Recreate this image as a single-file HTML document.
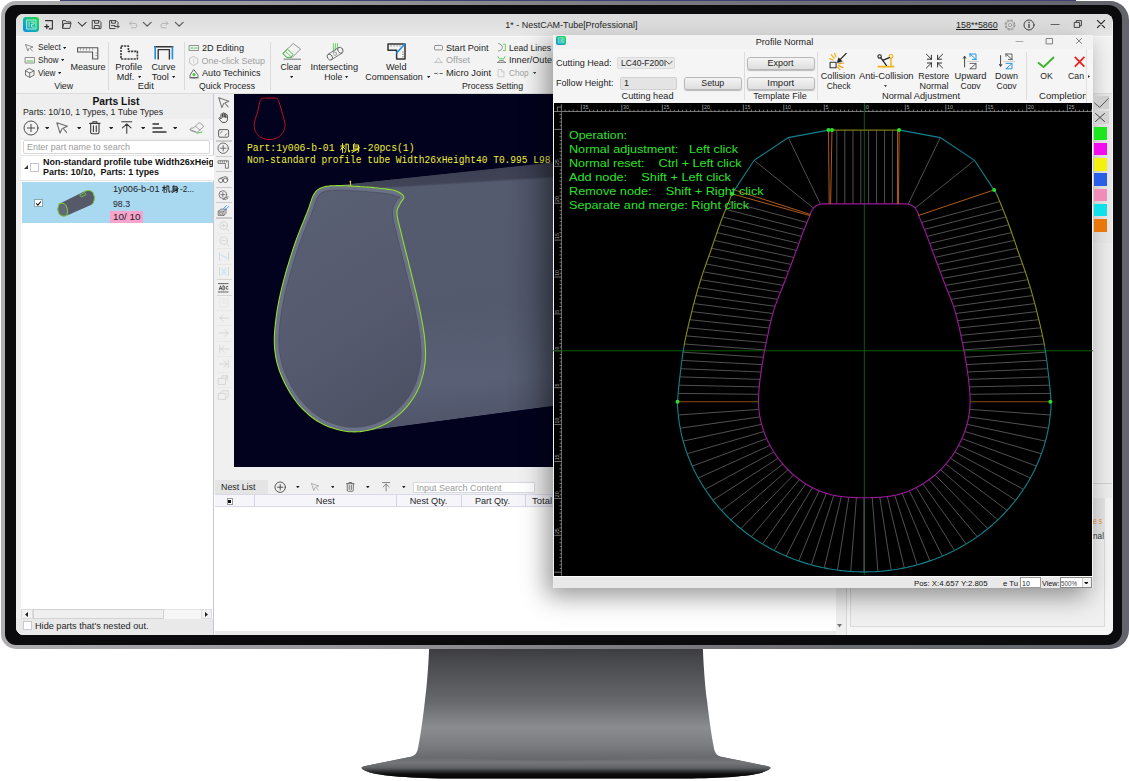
<!DOCTYPE html><html><head><meta charset="utf-8"><title>NestCAM</title><style>
html,body{margin:0;padding:0;background:#fff;}
body{width:1129px;height:781px;position:relative;overflow:hidden;font-family:"Liberation Sans",sans-serif;}
.b{position:absolute;box-sizing:border-box;display:block;}
.t{position:absolute;white-space:pre;}
#scr{position:absolute;left:16px;top:14px;width:1096.8px;height:620.6px;border-radius:7px 8px 7px 8px;overflow:hidden;background:#f0f0f0;}
#scr>.o{position:absolute;left:-16px;top:-14px;width:1129px;height:781px;}
</style></head><body>
<svg class="b" style="left:0.00px;top:0.00px;" width="1129" height="781" viewBox="0 0 1129 781">
<defs>
<linearGradient id="sg" gradientUnits="userSpaceOnUse" x1="0" y1="648" x2="0" y2="781">
<stop offset="0" stop-color="#3c3c40"/><stop offset="0.1" stop-color="#48494d"/><stop offset="0.4" stop-color="#66686c"/><stop offset="0.6" stop-color="#8a8c90"/><stop offset="0.72" stop-color="#7c7e82"/><stop offset="0.82" stop-color="#696b6f"/><stop offset="0.9" stop-color="#5c5e62"/><stop offset="1" stop-color="#3a3a3e"/>
</linearGradient>
<linearGradient id="bg2" gradientUnits="userSpaceOnUse" x1="0" y1="756" x2="0" y2="779">
<stop offset="0" stop-color="#66686c"/><stop offset="0.3" stop-color="#74767a"/><stop offset="0.52" stop-color="#5e6064"/><stop offset="0.68" stop-color="#2c2c2f"/><stop offset="0.8" stop-color="#0c0c0e"/><stop offset="1" stop-color="#050506"/>
</linearGradient>
</defs>
<path d="M429.2 646 C428.6 665 426.6 690 425 700 C422.6 722 420 738 418.4 746 C417.6 752 416 755 411 756.8 L364 766.2 Q359.6 767.4 363 769.6 C372 775.4 398 777.6 440 778.4 L692.0 778.4 C734.0 777.6 760.0 775.4 769.0 769.6 Q772.4 767.4 768.0 766.2 L721.0 756.8 C716.0 755 714.4 752 713.6 746 C712.0 738 709.4 722 707.0 700 C705.4 690 703.4 665 702.8 646 Z" fill="url(#sg)"/>
<path d="M411 756.8 L364 766.2 Q359.6 767.4 363 769.6 C372 775.4 398 777.6 440 778.4 L692.0 778.4 C734.0 777.6 760.0 775.4 769.0 769.6 Q772.4 767.4 768.0 766.2 L721.0 756.8 Q566.0 764 411 756.8Z" fill="url(#bg2)"/>
</svg>
<div class="b" style="left:60.00px;top:0.20px;width:1016.00px;height:1.40px;background:#1e1e5c;opacity:0.85;"></div>
<div class="b" style="left:1.00px;top:1.00px;width:1127.60px;height:647.60px;background:linear-gradient(90deg,#b0aeb0 0%,#a6a6aa 8%,#98989c 30%,#808085 50%,#6c6c73 75%,#64646c 100%);border-radius:15px 19px 19px 15px;"></div>
<div class="b" style="left:5.20px;top:5.00px;width:1116.80px;height:639.70px;background:#0b0b0d;border-radius:11px 14px 14px 11px;"></div>
<div id="scr"><div class="o">
<div class="b" style="left:16.00px;top:14.00px;width:1096.00px;height:21.50px;background:linear-gradient(#dcdcdc,#e2e2e2 60%,#e8e8e8);"></div>
<div class="b" style="left:16.00px;top:35.50px;width:1096.00px;height:1.50px;background:#fafafa;"></div>
<div class="b" style="left:16.00px;top:37.00px;width:1096.00px;height:55.50px;background:#f3f3f3;"></div>
<div class="b" style="left:16.00px;top:92.50px;width:1096.00px;height:1.00px;background:#dcdcdc;"></div>
<div class="b" style="left:23px;top:17px;width:15.6px;height:15px;border-radius:3px;background:linear-gradient(40deg,#0c8ee6 0%,#10b4a8 45%,#18de38 100%);"></div>
<svg class="b" style="left:25.50px;top:19.30px;overflow:visible" width="11" height="11" viewBox="0 0 11 11" fill="none" stroke-linecap="round" stroke-linejoin="round"><path d="M1 1H10V10H1Z M3 3V8 M5 3H8V5.2H5.6V8H8" stroke="#c8f4e6" stroke-width="0.9"/></svg>
<svg class="b" style="left:43.80px;top:19.50px;overflow:visible" width="9" height="9.5" viewBox="0 0 9 9.5" fill="none" stroke-linecap="round" stroke-linejoin="round"><path d="M1.5 0.6H8.4V8.9H5.2" stroke="#333" stroke-width="1.1"/><path d="M2.8 4.6V8.6M0.8 6.6H4.8" stroke="#222" stroke-width="1.1"/></svg>
<svg class="b" style="left:62.00px;top:19.80px;overflow:visible" width="9.5" height="8.6" viewBox="0 0 9.5 8.6" fill="none" stroke-linecap="round" stroke-linejoin="round"><path d="M0.6 8V0.6H3.6L4.6 1.9H8.7V3.4M0.6 8L1.9 3.4H9L7.9 8Z" stroke="#444" stroke-width="1"/></svg>
<svg class="b" style="left:77.60px;top:22.20px;overflow:visible" width="8.4" height="4.6" viewBox="0 0 8.4 4.6" fill="none" stroke-linecap="round" stroke-linejoin="round"><path d="M0.3 0.3L4.2 4.199999999999999L8.1 0.3" stroke="#444" stroke-width="1.15"/></svg>
<svg class="b" style="left:91.80px;top:19.50px;overflow:visible" width="9.6" height="9.2" viewBox="0 0 9.6 9.2" fill="none" stroke-linecap="round" stroke-linejoin="round"><path d="M0.6 0.6H7.2L9 2.4V8.6H0.6Z M2.6 0.8V3.2H6.6V0.8 M2.4 8.4V5.6H7.2V8.4" stroke="#444" stroke-width="1"/></svg>
<svg class="b" style="left:109.20px;top:19.50px;overflow:visible" width="10.4" height="9.2" viewBox="0 0 10.4 9.2" fill="none" stroke-linecap="round" stroke-linejoin="round"><path d="M9 4.4V2.4L7.2 0.6H0.6V8.6H6 M2.6 0.8V3.2H6.4V0.8 M2.4 5.6H6" stroke="#444" stroke-width="1"/><path d="M5.6 6.6H10M8.4 5L10 6.6L8.4 8.2" stroke="#444" stroke-width="1"/></svg>
<svg class="b" style="left:129.00px;top:20.50px;overflow:visible" width="8.6" height="7.4" viewBox="0 0 8.6 7.4" fill="none" stroke-linecap="round" stroke-linejoin="round"><path d="M2.4 0.6L0.6 2.4L2.4 4.2M0.8 2.4H5.6A2.2 2.2 0 0 1 5.6 6.8H2.6" stroke="#b4b4b4" stroke-width="1"/></svg>
<svg class="b" style="left:143.40px;top:22.20px;overflow:visible" width="8.4" height="4.6" viewBox="0 0 8.4 4.6" fill="none" stroke-linecap="round" stroke-linejoin="round"><path d="M0.3 0.3L4.2 4.199999999999999L8.1 0.3" stroke="#555" stroke-width="1.15"/></svg>
<svg class="b" style="left:160.20px;top:20.50px;overflow:visible" width="8.6" height="7.4" viewBox="0 0 8.6 7.4" fill="none" stroke-linecap="round" stroke-linejoin="round"><path d="M6.2 0.6L8 2.4L6.2 4.2M7.8 2.4H3A2.2 2.2 0 0 0 3 6.8H6" stroke="#b4b4b4" stroke-width="1"/></svg>
<svg class="b" style="left:174.60px;top:22.20px;overflow:visible" width="8.4" height="4.6" viewBox="0 0 8.4 4.6" fill="none" stroke-linecap="round" stroke-linejoin="round"><path d="M0.3 0.3L4.2 4.199999999999999L8.1 0.3" stroke="#555" stroke-width="1.15"/></svg>
<svg class="b" style="left:1004.20px;top:18.60px;overflow:visible" width="12" height="12" viewBox="0 0 12 12" fill="none" stroke-linecap="round" stroke-linejoin="round"><circle cx="6" cy="6" r="4.9" stroke="#9c9c9c" stroke-width="1.1" stroke-dasharray="2.4 1.45" stroke-linecap="butt"/><circle cx="6" cy="6" r="4" stroke="#9c9c9c" stroke-width="0.8"/><circle cx="6" cy="6" r="1.7" stroke="#9c9c9c" stroke-width="0.8"/></svg>
<svg class="b" style="left:1023.30px;top:18.60px;overflow:visible" width="12" height="12" viewBox="0 0 12 12" fill="none" stroke-linecap="round" stroke-linejoin="round"><circle cx="6" cy="6" r="5" stroke="#333" stroke-width="0.9"/><path d="M6 5.4V8.6" stroke="#333" stroke-width="1.2"/><circle cx="6" cy="3.4" r="0.75" fill="#333"/></svg>
<svg class="b" style="left:1051.00px;top:23.90px;overflow:visible" width="8.5" height="1" viewBox="0 0 8.5 1" fill="none" stroke-linecap="round" stroke-linejoin="round"><path d="M0 0.5H8.2" stroke="#555" stroke-width="0.9"/></svg>
<svg class="b" style="left:1074.30px;top:20.40px;overflow:visible" width="8" height="8" viewBox="0 0 8 8" fill="none" stroke-linecap="round" stroke-linejoin="round"><path d="M0.6 2.4H5.6V7.4H0.6Z M2.2 2.2V0.6H7.4V5.8H5.8" stroke="#333" stroke-width="0.9"/></svg>
<svg class="b" style="left:1097.30px;top:20.40px;overflow:visible" width="8" height="8" viewBox="0 0 8 8" fill="none" stroke-linecap="round" stroke-linejoin="round"><path d="M0.4 0.4L7.6 7.6M7.6 0.4L0.4 7.6" stroke="#222" stroke-width="1.1"/></svg>
<div class="t" style="left:504.64px;top:19.90px;font-size:9px;line-height:11px;color:#1e1e1e;transform:scaleX(0.995);transform-origin:center center;">1* - NestCAM-Tube[Professional]</div>
<div class="t" style="left:955.80px;top:19.60px;font-size:9px;line-height:11px;color:#1e1e1e;transform:scaleX(0.994);transform-origin:left center;text-decoration:underline;">158**5860</div>
<div class="t" style="left:37.80px;top:42.20px;font-size:9px;line-height:11px;color:#1e1e1e;transform:scaleX(0.911);transform-origin:left center;">Select</div>
<div class="t" style="left:37.80px;top:55.00px;font-size:9px;line-height:11px;color:#1e1e1e;transform:scaleX(0.911);transform-origin:left center;">Show</div>
<div class="t" style="left:37.80px;top:68.00px;font-size:9px;line-height:11px;color:#1e1e1e;transform:scaleX(0.905);transform-origin:left center;">View</div>
<div class="t" style="left:70.49px;top:61.60px;font-size:9px;line-height:11px;color:#1e1e1e;">Measure</div>
<div class="t" style="left:53.93px;top:81.20px;font-size:9px;line-height:11px;color:#1e1e1e;transform:scaleX(0.982);transform-origin:center center;">View</div>
<div class="t" style="left:116.24px;top:61.60px;font-size:9px;line-height:11px;color:#1e1e1e;transform:scaleX(1.058);transform-origin:center center;">Profile</div>
<div class="t" style="left:116.75px;top:71.60px;font-size:9px;line-height:11px;color:#1e1e1e;">Mdf.</div>
<div class="t" style="left:151.60px;top:61.60px;font-size:9px;line-height:11px;color:#1e1e1e;">Curve</div>
<div class="t" style="left:152.24px;top:71.60px;font-size:9px;line-height:11px;color:#1e1e1e;transform:scaleX(1.030);transform-origin:center center;">Tool</div>
<div class="t" style="left:138.05px;top:81.20px;font-size:9px;line-height:11px;color:#1e1e1e;transform:scaleX(1.032);transform-origin:center center;">Edit</div>
<div class="t" style="left:201.60px;top:42.70px;font-size:9px;line-height:11px;color:#1e1e1e;transform:scaleX(1.011);transform-origin:left center;">2D Editing</div>
<div class="t" style="left:201.60px;top:55.50px;font-size:9px;line-height:11px;color:#a0a0a0;">One-click Setup</div>
<div class="t" style="left:201.60px;top:68.30px;font-size:9px;line-height:11px;color:#1e1e1e;transform:scaleX(1.011);transform-origin:left center;">Auto Techinics</div>
<div class="t" style="left:197.99px;top:81.20px;font-size:9px;line-height:11px;color:#1e1e1e;transform:scaleX(0.965);transform-origin:center center;">Quick Process</div>
<div class="t" style="left:280.25px;top:61.60px;font-size:9px;line-height:11px;color:#1e1e1e;transform:scaleX(0.953);transform-origin:center center;">Clear</div>
<div class="t" style="left:310.74px;top:61.60px;font-size:9px;line-height:11px;color:#1e1e1e;transform:scaleX(1.021);transform-origin:center center;">Intersecting</div>
<div class="t" style="left:323.74px;top:71.80px;font-size:9px;line-height:11px;color:#1e1e1e;transform:scaleX(0.972);transform-origin:center center;">Hole</div>
<div class="t" style="left:385.83px;top:61.60px;font-size:9px;line-height:11px;color:#1e1e1e;transform:scaleX(1.008);transform-origin:center center;">Weld</div>
<div class="t" style="left:365.28px;top:71.80px;font-size:9px;line-height:11px;color:#1e1e1e;transform:scaleX(0.991);transform-origin:center center;">Compensation</div>
<div class="t" style="left:446.00px;top:42.50px;font-size:9px;line-height:11px;color:#1e1e1e;transform:scaleX(1.011);transform-origin:left center;">Start Point</div>
<div class="t" style="left:446.00px;top:55.20px;font-size:9px;line-height:11px;color:#a0a0a0;transform:scaleX(1.007);transform-origin:left center;">Offset</div>
<div class="t" style="left:446.00px;top:68.00px;font-size:9px;line-height:11px;color:#1e1e1e;transform:scaleX(1.034);transform-origin:left center;">Micro Joint</div>
<div class="t" style="left:508.50px;top:42.50px;font-size:9px;line-height:11px;color:#1e1e1e;transform:scaleX(0.954);transform-origin:left center;">Lead Lines</div>
<div class="t" style="left:508.50px;top:55.20px;font-size:9px;line-height:11px;color:#1e1e1e;transform:scaleX(1.011);transform-origin:left center;">Inner/Oute</div>
<div class="t" style="left:508.50px;top:68.00px;font-size:9px;line-height:11px;color:#a0a0a0;transform:scaleX(0.906);transform-origin:left center;">Chop</div>
<div class="b" style="left:362.00px;top:79.90px;width:62.00px;height:2.00px;background:#f3f3f3;"></div>
<div class="t" style="left:461.48px;top:81.20px;font-size:9px;line-height:11px;color:#1e1e1e;transform:scaleX(0.968);transform-origin:center center;">Process Setting</div>
<div class="b" style="left:108.30px;top:42.00px;width:1.00px;height:48.00px;background:#dadada;"></div>
<div class="b" style="left:183.50px;top:42.00px;width:1.00px;height:48.00px;background:#dadada;"></div>
<div class="b" style="left:270.30px;top:42.00px;width:1.00px;height:48.00px;background:#dadada;"></div>
<svg class="b" style="left:24.50px;top:43.50px;overflow:visible" width="9" height="8" viewBox="0 0 9 8" fill="none" stroke-linecap="round" stroke-linejoin="round"><path d="M0.6 0.6L8 3L5 4.2L7.4 7M0.6 0.6L2.8 7L4 4.4" stroke="#777" stroke-width="0.8"/></svg>
<svg class="b" style="left:24.50px;top:57.00px;overflow:visible" width="10" height="6.5" viewBox="0 0 10 6.5" fill="none" stroke-linecap="round" stroke-linejoin="round"><rect x="0.5" y="0.5" width="9" height="5.5" stroke="#777" stroke-width="0.8"/><path d="M2 4H8" stroke="#5c5" stroke-width="1"/></svg>
<svg class="b" style="left:25.00px;top:68.00px;overflow:visible" width="9.5" height="10" viewBox="0 0 9.5 10" fill="none" stroke-linecap="round" stroke-linejoin="round"><path d="M4.7 0.6L9 2.8V7.2L4.7 9.4L0.5 7.2V2.8ZM0.6 2.9L4.7 5L8.9 2.9M4.7 5V9.3" stroke="#555" stroke-width="0.8"/></svg>
<svg class="b" style="left:62.80px;top:46.50px" width="3.2" height="2.2"><path d="M0 0L3.2 0L1.6 2.2Z" fill="#222"/></svg>
<svg class="b" style="left:60.80px;top:59.30px" width="3.2" height="2.2"><path d="M0 0L3.2 0L1.6 2.2Z" fill="#222"/></svg>
<svg class="b" style="left:57.60px;top:72.30px" width="3.2" height="2.2"><path d="M0 0L3.2 0L1.6 2.2Z" fill="#222"/></svg>
<svg class="b" style="left:77.00px;top:47.00px;overflow:visible" width="21.5" height="12.5" viewBox="0 0 21.5 12.5" fill="none" stroke-linecap="round" stroke-linejoin="round"><path d="M0.6 0.8H20.8V12H15.6V5H0.6Z" stroke="#555" stroke-width="1.1"/><path d="M3.5 1V3M6.5 1V3M9.5 1V3M12.5 1V3M15.6 1V3M18.8 6H20.5M18.8 8.5H20.5" stroke="#777" stroke-width="0.6"/></svg>
<svg class="b" style="left:119.50px;top:44.50px;overflow:visible" width="18.5" height="15" viewBox="0 0 18.5 15" fill="none" stroke-linecap="round" stroke-linejoin="round"><path d="M1 1H8.4V6.4H17.4V14H1Z" stroke="#3c3c3c" stroke-width="1.6" stroke-dasharray="2.2 0.9" stroke-linecap="butt"/></svg>
<svg class="b" style="left:137.60px;top:75.90px" width="3.2" height="2.2"><path d="M0 0L3.2 0L1.6 2.2Z" fill="#222"/></svg>
<svg class="b" style="left:154.00px;top:45.50px;overflow:visible" width="19.5" height="13.5" viewBox="0 0 19.5 13.5" fill="none" stroke-linecap="round" stroke-linejoin="round"><path d="M0.8 0.8H18.8" stroke="#333" stroke-width="1.6"/><path d="M1.2 0.8V12.8" stroke="#1c8fe0" stroke-width="1.6"/><path d="M18.4 0.8V12.8" stroke="#1c8fe0" stroke-width="1.6"/><path d="M4.2 13V3.6H15.4V13" stroke="#333" stroke-width="1.4"/></svg>
<svg class="b" style="left:171.60px;top:75.90px" width="3.2" height="2.2"><path d="M0 0L3.2 0L1.6 2.2Z" fill="#222"/></svg>
<svg class="b" style="left:188.50px;top:44.50px;overflow:visible" width="10" height="6" viewBox="0 0 10 6" fill="none" stroke-linecap="round" stroke-linejoin="round"><rect x="0.5" y="0.5" width="9" height="5" stroke="#777" stroke-width="0.8"/><path d="M2 3H4.2M5.8 3H8" stroke="#4c4" stroke-width="1.2"/></svg>
<svg class="b" style="left:189.00px;top:55.50px;overflow:visible" width="9.5" height="10" viewBox="0 0 9.5 10" fill="none" stroke-linecap="round" stroke-linejoin="round"><path d="M4.7 0.6L8.8 2.9V7.1L4.7 9.4L0.6 7.1V2.9Z" stroke="#bcbcbc" stroke-width="0.9"/><path d="M4.7 3V7" stroke="#ccc" stroke-width="0.9"/></svg>
<svg class="b" style="left:188.80px;top:68.50px;overflow:visible" width="10" height="9.5" viewBox="0 0 10 9.5" fill="none" stroke-linecap="round" stroke-linejoin="round"><path d="M5 0.8L8.6 5.4C9.8 7.2 8.6 8.8 7 8.8H3C1.4 8.8 0.2 7.2 1.4 5.4Z" stroke="#555" stroke-width="0.9"/><circle cx="5" cy="5.6" r="1.6" fill="#4c4"/><path d="M0.6 8.8H9.4" stroke="#555" stroke-width="0.9"/></svg>
<svg class="b" style="left:281.50px;top:43.00px;overflow:visible" width="19.5" height="17" viewBox="0 0 19.5 17" fill="none" stroke-linecap="round" stroke-linejoin="round"><path d="M11.5 0.8L18.6 6L10 14.6H5L1 10.6Z" stroke="#888" stroke-width="0.9"/><path d="M1.2 10.6L5.4 6.2L11.2 11.4L8.6 14.4H5Z" stroke="#3ec83e" stroke-width="1"/><path d="M3.6 8.4L8.8 13.6" stroke="#3ec83e" stroke-width="0.8"/><path d="M2 16.2H18.6" stroke="#666" stroke-width="0.9"/></svg>
<svg class="b" style="left:289.60px;top:76.30px" width="3.2" height="2.2"><path d="M0 0L3.2 0L1.6 2.2Z" fill="#222"/></svg>
<svg class="b" style="left:326.00px;top:43.20px;overflow:visible" width="19" height="17.5" viewBox="0 0 19 17.5" fill="none" stroke-linecap="round" stroke-linejoin="round"><path d="M7.4 0.6V8.4M9.4 0.6V7.4M11.4 0.6V6.6" stroke="#5c5" stroke-width="0.9"/><path d="M2 11.4L12.4 4.6M5.6 16.6L16.4 9.8" stroke="#666" stroke-width="0.9"/><ellipse cx="14.4" cy="7.2" rx="2.4" ry="3.2" transform="rotate(-33 14.4 7.2)" stroke="#666" stroke-width="0.9"/><ellipse cx="3.8" cy="14" rx="2.4" ry="3.2" transform="rotate(-33 3.8 14)" stroke="#666" stroke-width="0.9"/><ellipse cx="9" cy="10.6" rx="1.4" ry="2" transform="rotate(-33 9 10.6)" stroke="#888" stroke-width="0.7"/></svg>
<svg class="b" style="left:345.40px;top:76.30px" width="3.2" height="2.2"><path d="M0 0L3.2 0L1.6 2.2Z" fill="#222"/></svg>
<svg class="b" style="left:386.50px;top:43.20px;overflow:visible" width="19" height="17" viewBox="0 0 19 17" fill="none" stroke-linecap="round" stroke-linejoin="round"><path d="M1 1H18V16H9.6V7.2H1Z" stroke="#333" stroke-width="1.5"/><path d="M17.6 1.2L9.8 9.8" stroke="#1c8fe0" stroke-width="1.6"/><path d="M4 1.4V3.4M7 1.4V3.4M10 1.4V3.4M13 1.4V3.4M15.4 9H17.4M15.4 11.4H17.4M15.4 13.8H17.4" stroke="#666" stroke-width="0.6"/></svg>
<svg class="b" style="left:426.60px;top:76.30px" width="3.2" height="2.2"><path d="M0 0L3.2 0L1.6 2.2Z" fill="#222"/></svg>
<svg class="b" style="left:434.30px;top:44.60px;overflow:visible" width="9" height="5.4" viewBox="0 0 9 5.4" fill="none" stroke-linecap="round" stroke-linejoin="round"><rect x="0.5" y="0.5" width="8" height="4.4" rx="1" stroke="#777" stroke-width="0.8"/></svg>
<svg class="b" style="left:434.30px;top:57.00px;overflow:visible" width="9" height="6" viewBox="0 0 9 6" fill="none" stroke-linecap="round" stroke-linejoin="round"><path d="M0.5 5.4H8.5M2 5.2C2.4 3.2 3 3.6 3.4 2.4C3.6 0.8 5.4 0.8 5.6 2.4C6 3.6 6.6 3.2 7 5.2" stroke="#b8b8b8" stroke-width="0.8"/></svg>
<svg class="b" style="left:434.30px;top:71.60px;overflow:visible" width="9" height="3" viewBox="0 0 9 3" fill="none" stroke-linecap="round" stroke-linejoin="round"><path d="M0.6 1.5H2.8M6 1.5H8.4" stroke="#666" stroke-width="1"/><path d="M3.4 0.6L4.4 1.5L3.4 2.4" stroke="#999" stroke-width="0.6"/></svg>
<svg class="b" style="left:497.60px;top:43.40px;overflow:visible" width="8" height="8.6" viewBox="0 0 8 8.6" fill="none" stroke-linecap="round" stroke-linejoin="round"><path d="M0.6 0.6C3 1 4.4 2.6 4.4 4.4C4.4 6.2 3 7.6 0.6 8" stroke="#777" stroke-width="0.8"/><path d="M5.4 1.2H7.4V7.6H5.4" stroke="#4c4" stroke-width="0.8"/></svg>
<svg class="b" style="left:497.00px;top:56.00px;overflow:visible" width="9" height="7" viewBox="0 0 9 7" fill="none" stroke-linecap="round" stroke-linejoin="round"><path d="M1 0.6L2.4 2.8H6.8L8 0.6" stroke="#4c4" stroke-width="0.9"/><path d="M0.6 6.4H8.6M1.4 6.2L2.6 4.6H6.6L7.6 6.2" stroke="#666" stroke-width="0.8"/></svg>
<svg class="b" style="left:498.00px;top:68.80px;overflow:visible" width="6.6" height="8.4" viewBox="0 0 6.6 8.4" fill="none" stroke-linecap="round" stroke-linejoin="round"><path d="M0.5 0.5H3.8L6 2.8V7.8H0.5Z M3.6 0.6V3H6" stroke="#c4c4c4" stroke-width="0.8"/></svg>
<svg class="b" style="left:533.20px;top:72.10px" width="3.2" height="2.2"><path d="M0 0L3.2 0L1.6 2.2Z" fill="#444"/></svg>
<div class="b" style="left:16.00px;top:93.50px;width:198.00px;height:541.00px;background:#ffffff;"></div>
<div class="b" style="left:16.00px;top:93.50px;width:5.00px;height:541.00px;background:#f0f0f0;"></div>
<div class="b" style="left:21.00px;top:93.50px;width:192.50px;height:46.00px;background:#eeeeee;"></div>
<div class="b" style="left:21.00px;top:118.50px;width:192.50px;height:19.50px;background:#f3f3f3;"></div>
<div class="b" style="left:213.20px;top:93.50px;width:1.30px;height:541.00px;background:#c6c6d8;"></div>
<div class="t" style="left:92.07px;top:95.45px;font-size:10.5px;line-height:12.5px;color:#111;font-weight:700;transform:scaleX(0.982);transform-origin:center center;">Parts List</div>
<div class="t" style="left:23.00px;top:107.20px;font-size:9px;line-height:11px;color:#1e1e1e;transform:scaleX(0.974);transform-origin:left center;">Parts: 10/10, 1 Types, 1 Tube Types</div>
<svg class="b" style="left:22.60px;top:120.00px;overflow:visible" width="16.0" height="16.0" viewBox="0 0 16.0 16.0" fill="none" stroke-linecap="round" stroke-linejoin="round"><circle cx="8.0" cy="8.0" r="7.0" stroke="#3a3a3a" stroke-width="0.9"/><path d="M8.0 4.36V11.64M4.36 8.0H11.64" stroke="#3a3a3a" stroke-width="0.9"/></svg>
<svg class="b" style="left:44.60px;top:126.65px" width="4.4" height="2.7"><path d="M0 0L4.4 0L2.2 2.7Z" fill="#222"/></svg>
<svg class="b" style="left:56.48px;top:121.68px;overflow:visible" width="12.24" height="12.24" viewBox="0 0 12.24 12.24" fill="none" stroke-linecap="round" stroke-linejoin="round"><g transform="scale(1.36)"><path d="M0.6 0.6L8.4 3.2L5.2 4.6L7.8 7.6M0.6 0.6L3 8.2L4.4 5" stroke="#6a6a6a" stroke-width="0.8"/></g></svg>
<svg class="b" style="left:76.80px;top:126.65px" width="4.4" height="2.7"><path d="M0 0L4.4 0L2.2 2.7Z" fill="#222"/></svg>
<svg class="b" style="left:89.15px;top:120.94px;overflow:visible" width="11.700000000000001" height="13.520000000000001" viewBox="0 0 11.700000000000001 13.520000000000001" fill="none" stroke-linecap="round" stroke-linejoin="round"><g transform="scale(1.3)"><path d="M0.5 1.8H8.5M3 1.6V0.6H6V1.6M1.3 2V8.6Q1.3 9.8 2.5 9.8H6.5Q7.7 9.8 7.7 8.6V2M3.4 3.6V8M5.6 3.6V8" stroke="#3a3a3a" stroke-width="0.85"/></g></svg>
<svg class="b" style="left:108.80px;top:126.65px" width="4.4" height="2.7"><path d="M0 0L4.4 0L2.2 2.7Z" fill="#222"/></svg>
<svg class="b" style="left:121.24px;top:121.20px;overflow:visible" width="11.52" height="12.8" viewBox="0 0 11.52 12.8" fill="none" stroke-linecap="round" stroke-linejoin="round"><g transform="scale(1.28)"><path d="M0.6 0.6H8.4M4.5 2.4V9.6M1.2 5.4L4.5 2.2L7.8 5.4" stroke="#3a3a3a" stroke-width="0.85"/></g></svg>
<svg class="b" style="left:141.00px;top:126.65px" width="4.4" height="2.7"><path d="M0 0L4.4 0L2.2 2.7Z" fill="#222"/></svg>
<svg class="b" style="left:151.60px;top:123.20px;overflow:visible" width="15" height="10" viewBox="0 0 15 10" fill="none" stroke-linecap="round" stroke-linejoin="round"><path d="M0.5 1H7M0.5 5H10.5M0.5 9H14.5" stroke="#333" stroke-width="1.5" stroke-linecap="butt"/></svg>
<svg class="b" style="left:173.00px;top:126.65px" width="4.4" height="2.7"><path d="M0 0L4.4 0L2.2 2.7Z" fill="#222"/></svg>
<svg class="b" style="left:188.60px;top:122.20px;overflow:visible" width="15.5" height="12" viewBox="0 0 15.5 12" fill="none" stroke-linecap="round" stroke-linejoin="round"><path d="M5 5.6L9.4 1.2Q10.4 0.4 11.4 1.2L14 3.4Q14.8 4.4 13.8 5.4L8.4 10Q7.2 10.8 6 10L1.6 8.6Q0.4 7.4 1.6 6.4Z" stroke="#888" stroke-width="0.8"/><path d="M6.4 4.2L11 8M1.4 7.6L6.8 9.8" stroke="#888" stroke-width="0.7"/><path d="M8 11.2L13 10" stroke="#5c5" stroke-width="1"/></svg>
<div class="b" style="left:23.00px;top:140.00px;width:186.50px;height:13.50px;background:#fff;border:1px solid #d6d6d6;border-radius:2px;"></div>
<div class="t" style="left:27.00px;top:141.80px;font-size:9px;line-height:11px;color:#9a9a9a;transform:scaleX(0.990);transform-origin:left center;">Enter part name to search</div>
<div class="b" style="left:21.00px;top:154.50px;width:192.50px;height:1.00px;background:#e4e4e4;"></div>
<svg class="b" style="left:23.5px;top:165px" width="4" height="4"><path d="M4 0L4 4L0 4Z" fill="#333"/></svg>
<div class="b" style="left:30.30px;top:162.70px;width:9.00px;height:9.00px;background:#fff;border:1px solid #c4c4d4;"></div>
<div class="t" style="left:43.00px;top:157.00px;font-size:9px;line-height:11px;color:#111;font-weight:700;transform:scaleX(0.995);transform-origin:left center;">Non-standard profile tube Width26xHeig</div>
<div class="t" style="left:43.00px;top:167.30px;font-size:9px;line-height:11px;color:#111;font-weight:700;transform:scaleX(0.991);transform-origin:left center;">Parts: 10/10,  Parts: 1 types</div>
<div class="b" style="left:213.30px;top:156.00px;width:1.00px;height:24.00px;background:#fff;"></div>
<div class="b" style="left:21.00px;top:179.50px;width:192.50px;height:1.00px;background:#e4e4e4;"></div>
<div class="b" style="left:21.80px;top:182.30px;width:191.00px;height:40.40px;background:#a9d8f1;"></div>
<div class="b" style="left:34.40px;top:198.60px;width:8.40px;height:8.40px;background:#fff;border:1px solid #8aa;"></div>
<svg class="b" style="left:35.2px;top:199.6px" width="7" height="7"><path d="M1.2 3.4L2.9 5.1L5.9 1.5" stroke="#111" stroke-width="1.1" fill="none"/></svg>
<svg class="b" style="left:55.50px;top:182.20px;overflow:visible" width="41" height="37" viewBox="0 0 41 37" fill="none" stroke-linecap="round" stroke-linejoin="round"><path d="M3 22 L28 9.5 Q34 7 37 10.5 Q40 16 37.5 20.5 L36 22.5 L11 33.5 Q5 35.6 2.6 31 Q0.6 27 3 22Z" fill="#555968"/>
<path d="M28 9.5 Q34 7 37 10.5 Q40 16 37.5 20.5 L36 22.5" fill="none" stroke="#7cd040" stroke-width="1"/>
<path d="M3 22 Q7.4 19.4 10.4 24 Q12.6 29 11 33.5 Q5 35.6 2.6 31 Q0.6 27 3 22Z" fill="#636876" stroke="#7cd040" stroke-width="1"/>
<path d="M24 12.6L28.6 10.4L30.2 12.6L25.6 14.8Z" fill="#5a6068" stroke="#7cd040" stroke-width="0.8"/></svg>
<div class="t" style="left:112.70px;top:184.40px;font-size:9px;line-height:11px;color:#1e1e1e;transform:scaleX(1.021);transform-origin:left center;">1y006-b-01</div>
<svg class="b" style="left:161.50px;top:185.00px" width="17.2" height="8.2" viewBox="0 0 21 10" fill="none" stroke="#1e1e1e" stroke-width="1.10" stroke-linecap="round" stroke-linejoin="round"><path d="M0.6 3H4.6M2.6 0.6V9.6M2.6 3.6L0.6 7M2.8 3.8L4.6 5.6M6 1.2H8.4V8.2Q8.4 9.2 9.6 9V7.6M6 1.2V5.5Q6 8 4.8 9.6"/><path transform="translate(11 0)" d="M3.4 0.6L2.4 2M2.6 2H7.6V7.6M2.6 2V6M2.6 3.9H7.6M2.6 5.9H7.6M0.6 7.6L7.6 6.6M8.8 4.6L1 9.6M7.6 7.6V8.6Q7.6 9.6 6.2 9.4"/></svg>
<div class="t" style="left:179.50px;top:184.40px;font-size:9px;line-height:11px;color:#1e1e1e;transform:scaleX(0.903);transform-origin:left center;">-2...</div>
<div class="t" style="left:112.70px;top:198.50px;font-size:9px;line-height:11px;color:#1e1e1e;transform:scaleX(0.970);transform-origin:left center;">98.3</div>
<div class="b" style="left:109.60px;top:211.40px;width:33.50px;height:11.30px;background:#f7a3cc;"></div>
<div class="t" style="left:112.70px;top:212.40px;font-size:9px;line-height:11px;color:#1e1e1e;transform:scaleX(1.099);transform-origin:left center;">10/ 10</div>
<div class="b" style="left:21.00px;top:608.80px;width:190.50px;height:10.60px;background:#f6f6f6;border-top:1px solid #e4e4e4;"></div>
<div class="b" style="left:21.00px;top:608.80px;width:11.60px;height:10.60px;background:#f2f2f2;border:1px solid #dcdcdc;"></div>
<div class="b" style="left:32.60px;top:608.80px;width:131.00px;height:10.60px;background:#efefef;border:1px solid #d2d2d2;"></div>
<div class="b" style="left:201.00px;top:608.80px;width:10.50px;height:10.60px;background:#f2f2f2;border:1px solid #dcdcdc;"></div>
<svg class="b" style="left:24.5px;top:611.5px" width="4" height="5"><path d="M3 0L3 5L0 2.5Z" fill="#222"/></svg>
<svg class="b" style="left:204.5px;top:611.5px" width="4" height="5"><path d="M0 0L0 5L3 2.5Z" fill="#222"/></svg>
<div class="b" style="left:16.00px;top:619.40px;width:197.30px;height:15.50px;background:#e9e9e9;"></div>
<div class="b" style="left:23.00px;top:621.00px;width:8.50px;height:8.50px;background:#fff;border:1px solid #c8c8d8;"></div>
<div class="t" style="left:35.00px;top:620.60px;font-size:9px;line-height:11px;color:#1e1e1e;transform:scaleX(1.015);transform-origin:left center;">Hide parts that&#x27;s nested out.</div>
<div class="b" style="left:214.30px;top:93.50px;width:19.70px;height:541.00px;background:#f0f0f0;"></div>
<div class="b" style="left:214.30px;top:467.20px;width:19.70px;height:170.00px;background:#ffffff;"></div>
<div class="b" style="left:216.00px;top:140.30px;width:15.50px;height:1.30px;background:#cbcbcb;"></div>
<div class="b" style="left:216.00px;top:155.70px;width:15.50px;height:1.30px;background:#cbcbcb;"></div>
<div class="b" style="left:216.00px;top:171.10px;width:15.50px;height:1.30px;background:#cbcbcb;"></div>
<div class="b" style="left:216.00px;top:186.50px;width:15.50px;height:1.30px;background:#cbcbcb;"></div>
<div class="b" style="left:216.00px;top:201.90px;width:15.50px;height:1.30px;background:#cbcbcb;"></div>
<div class="b" style="left:216.00px;top:217.30px;width:15.50px;height:1.30px;background:#cbcbcb;"></div>
<div class="b" style="left:216.50px;top:233.00px;width:15.00px;height:0.80px;background:#e8e8e8;"></div>
<div class="b" style="left:216.50px;top:248.40px;width:15.00px;height:0.80px;background:#e8e8e8;"></div>
<div class="b" style="left:216.50px;top:263.80px;width:15.00px;height:0.80px;background:#e8e8e8;"></div>
<div class="b" style="left:216.50px;top:279.20px;width:15.00px;height:0.80px;background:#d6d6d6;"></div>
<div class="b" style="left:216.50px;top:294.60px;width:15.00px;height:0.80px;background:#d6d6d6;"></div>
<div class="b" style="left:216.50px;top:310.00px;width:15.00px;height:0.80px;background:#e8e8e8;"></div>
<div class="b" style="left:216.50px;top:325.40px;width:15.00px;height:0.80px;background:#e8e8e8;"></div>
<div class="b" style="left:216.50px;top:340.80px;width:15.00px;height:0.80px;background:#e8e8e8;"></div>
<div class="b" style="left:216.50px;top:356.20px;width:15.00px;height:0.80px;background:#e8e8e8;"></div>
<div class="b" style="left:216.50px;top:371.60px;width:15.00px;height:0.80px;background:#e8e8e8;"></div>
<div class="b" style="left:216.50px;top:387.00px;width:15.00px;height:0.80px;background:#e8e8e8;"></div>
<svg class="b" style="left:218.35px;top:96.55px;overflow:visible" width="11.700000000000001" height="11.700000000000001" viewBox="0 0 11.700000000000001 11.700000000000001" fill="none" stroke-linecap="round" stroke-linejoin="round"><g transform="scale(1.3)"><path d="M0.6 0.6L8.4 3.2L5.2 4.6L7.8 7.6M0.6 0.6L3 8.2L4.4 5" stroke="#777" stroke-width="0.8"/></g></svg>
<svg class="b" style="left:218.20px;top:112.10px;overflow:visible" width="11.4" height="11.4" viewBox="0 0 11.4 11.4" fill="none" stroke-linecap="round" stroke-linejoin="round"><path d="M3 6.5V2.6a0.8 0.8 0 0 1 1.6 0V5M4.6 5V1.6a0.8 0.8 0 0 1 1.6 0V5M6.2 5V2a0.8 0.8 0 0 1 1.6 0V5.4M7.8 5.4V3.4a0.8 0.8 0 0 1 1.6 0V7.4c0 2-1.4 3.2-3.4 3.2c-1.6 0-2.6-0.6-3.4-1.8L1 6.6c-0.4-0.8 0.6-1.4 1.2-0.8L3 6.7" stroke="#444" stroke-width="0.95"/></svg>
<svg class="b" style="left:218.20px;top:128.80px;overflow:visible" width="11.2" height="8.8" viewBox="0 0 11.2 8.8" fill="none" stroke-linecap="round" stroke-linejoin="round"><rect x="0.6" y="0.6" width="10" height="7.6" rx="1.4" stroke="#5e5e5e" stroke-width="1"/><path d="M2.4 4L4.2 2.4M7 6.4L8.8 4.8" stroke="#5e5e5e" stroke-width="0.9"/></svg>
<svg class="b" style="left:217.30px;top:142.40px;overflow:visible" width="12.4" height="12.4" viewBox="0 0 12.4 12.4" fill="none" stroke-linecap="round" stroke-linejoin="round"><circle cx="6.2" cy="6.2" r="5.2" stroke="#5e5e5e" stroke-width="0.9"/><path d="M6.2 3.50V8.90M3.50 6.2H8.90" stroke="#5e5e5e" stroke-width="0.9"/></svg>
<svg class="b" style="left:218.40px;top:159.60px;overflow:visible" width="11" height="9" viewBox="0 0 11 9" fill="none" stroke-linecap="round" stroke-linejoin="round"><path d="M0.5 0.8H10.4V8.2H7.4V3.4H0.5Z" stroke="#5e5e5e" stroke-width="0.8"/><path d="M2.5 1V2.4M4.5 1V2.4M6.5 1V2.4M8.5 1V2.4" stroke="#5e5e5e" stroke-width="0.5"/></svg>
<svg class="b" style="left:218.40px;top:175.80px;overflow:visible" width="11" height="7.6" viewBox="0 0 11 7.6" fill="none" stroke-linecap="round" stroke-linejoin="round"><circle cx="2.8" cy="4.4" r="2.2" stroke="#5e5e5e" stroke-width="0.8"/><circle cx="7.4" cy="4.4" r="2.2" stroke="#5e5e5e" stroke-width="0.8"/><path d="M2.8 2.2L7 0.6Q9.8 0.4 10 3.4" stroke="#5e5e5e" stroke-width="0.8"/></svg>
<svg class="b" style="left:218.40px;top:189.60px;overflow:visible" width="11" height="10.6" viewBox="0 0 11 10.6" fill="none" stroke-linecap="round" stroke-linejoin="round"><circle cx="4.8" cy="4.6" r="3.8" stroke="#5e5e5e" stroke-width="0.8"/><path d="M4.8 2.6V6.6M2.8 4.6H6.8" stroke="#5e5e5e" stroke-width="0.8"/><path d="M5 9.6Q8 10.2 10 8.2M6 8.4L10.2 6.8" stroke="#5e5e5e" stroke-width="0.7"/></svg>
<svg class="b" style="left:218.40px;top:204.80px;overflow:visible" width="11.4" height="11" viewBox="0 0 11.4 11" fill="none" stroke-linecap="round" stroke-linejoin="round"><path d="M0.6 6.2H6V10.4H0.6ZM0.6 6.2L2.6 4.2H8L6 6.2M8 4.2V8.4L6 10.4" stroke="#5e5e5e" stroke-width="0.8"/><path d="M5.6 3.4L8.4 0.6M7.6 4.6L10.8 1.4" stroke="#39f" stroke-width="0.9"/><path d="M2 7.6H4.6V9.2H2Z" stroke="#5e5e5e" stroke-width="0.6"/></svg>
<svg class="b" style="left:218.80px;top:220.60px;overflow:visible" width="10.6" height="10.6" viewBox="0 0 10.6 10.6" fill="none" stroke-linecap="round" stroke-linejoin="round"><circle cx="4.6" cy="4.6" r="3.8" stroke="#cfcfcf" stroke-width="0.8"/><path d="M4.6 2.8V6.4M2.8 4.6H6.4M7.4 7.4L10 10" stroke="#cfcfcf" stroke-width="0.8"/></svg>
<svg class="b" style="left:218.80px;top:236.00px;overflow:visible" width="10.6" height="10.6" viewBox="0 0 10.6 10.6" fill="none" stroke-linecap="round" stroke-linejoin="round"><circle cx="4.6" cy="4.6" r="3.8" stroke="#cfcfcf" stroke-width="0.8"/><path d="M2.8 4.6H6.4M7.4 7.4L10 10" stroke="#cfcfcf" stroke-width="0.8"/></svg>
<svg class="b" style="left:218.80px;top:252.00px;overflow:visible" width="10" height="9" viewBox="0 0 10 9" fill="none" stroke-linecap="round" stroke-linejoin="round"><path d="M0.6 0.6V8.4M9.4 0.6V8.4" stroke="#cfcfcf" stroke-width="0.8"/><path d="M2 3L8 6" stroke="#bfe0f4" stroke-width="1"/></svg>
<svg class="b" style="left:218.80px;top:267.40px;overflow:visible" width="10" height="9" viewBox="0 0 10 9" fill="none" stroke-linecap="round" stroke-linejoin="round"><path d="M0.6 0.6V8.4M9.4 0.6V8.4" stroke="#cfcfcf" stroke-width="0.8"/><path d="M3 1.4L6.6 7.6M6.6 1.4L3 7.6" stroke="#bfe0f4" stroke-width="1"/></svg>
<svg class="b" style="left:218.20px;top:282.60px;overflow:visible" width="11.2" height="9.6" viewBox="0 0 11.2 9.6" fill="none" stroke-linecap="round" stroke-linejoin="round"><path d="M0.5 0.6H10.7" stroke="#444" stroke-width="0.9" stroke-dasharray="1.2 0.9"/><path d="M0.5 9H10.7" stroke="#444" stroke-width="0.9" stroke-dasharray="1.2 0.9"/><path d="M1.2 6.8L2.6 2.8L4 6.8M1.7 5.6H3.5M5 2.8V6.8H6.2Q7.2 6.6 6.6 4.8Q7.2 3 6 2.8ZM10 3.4Q8.2 2.4 8.2 4.8Q8.2 7.2 10 6.2" stroke="#333" stroke-width="0.75"/></svg>
<svg class="b" style="left:218.80px;top:298.00px;overflow:visible" width="10" height="9.4" viewBox="0 0 10 9.4" fill="none" stroke-linecap="round" stroke-linejoin="round"><path d="M1 0.6H9V8.8H1Z M3 3H7M3 5H7" stroke="#e4e4e4" stroke-width="0.8"/></svg>
<svg class="b" style="left:218.80px;top:314.00px;overflow:visible" width="10" height="8" viewBox="0 0 10 8" fill="none" stroke-linecap="round" stroke-linejoin="round"><path d="M9.4 4H0.8M4 0.8L0.8 4L4 7.2" stroke="#cfcfcf" stroke-width="0.8"/></svg>
<svg class="b" style="left:218.80px;top:329.40px;overflow:visible" width="10" height="8" viewBox="0 0 10 8" fill="none" stroke-linecap="round" stroke-linejoin="round"><path d="M0.6 4H9.2M6 0.8L9.2 4L6 7.2" stroke="#cfcfcf" stroke-width="0.8"/></svg>
<svg class="b" style="left:218.80px;top:344.80px;overflow:visible" width="10" height="8" viewBox="0 0 10 8" fill="none" stroke-linecap="round" stroke-linejoin="round"><path d="M9.4 4H2M5 0.8L1.8 4L5 7.2M0.6 0.6V7.4" stroke="#cfcfcf" stroke-width="0.8"/></svg>
<svg class="b" style="left:218.80px;top:360.20px;overflow:visible" width="10" height="8" viewBox="0 0 10 8" fill="none" stroke-linecap="round" stroke-linejoin="round"><path d="M0.6 4H8M5 0.8L8.2 4L5 7.2M9.4 0.6V7.4" stroke="#cfcfcf" stroke-width="0.8"/></svg>
<svg class="b" style="left:218.40px;top:374.60px;overflow:visible" width="11" height="10" viewBox="0 0 11 10" fill="none" stroke-linecap="round" stroke-linejoin="round"><path d="M0.6 3.4H7.6V9.4H0.6ZM4 3.2V0.8H9.4L7.6 3.2M9.4 0.8V5" stroke="#cfcfcf" stroke-width="0.8"/></svg>
<svg class="b" style="left:218.40px;top:390.00px;overflow:visible" width="11" height="10" viewBox="0 0 11 10" fill="none" stroke-linecap="round" stroke-linejoin="round"><path d="M0.6 3.4H7.6V9.4H0.6ZM2.4 3.2L4.4 0.8H10.4V6L7.6 9.2" stroke="#cfcfcf" stroke-width="0.8"/></svg>
<div class="b" style="left:234.00px;top:94.00px;width:400.00px;height:373.20px;background:#02021e;"></div>
<svg class="b" style="left:234px;top:94px" width="400" height="373.2" viewBox="0 0 400 373.2"><defs><linearGradient id="tb" x1="0" y1="0" x2="0.1" y2="1"><stop offset="0" stop-color="#565c70"/><stop offset="0.6" stop-color="#545a6e"/><stop offset="0.86" stop-color="#596075"/><stop offset="1" stop-color="#50556a"/></linearGradient><linearGradient id="tf" x1="0.2" y1="0" x2="0.6" y2="1"><stop offset="0" stop-color="#5a6074"/><stop offset="0.6" stop-color="#555a6e"/><stop offset="1" stop-color="#4e5265"/></linearGradient><linearGradient id="tband" x1="0" y1="0" x2="0.06" y2="1"><stop offset="0" stop-color="#3a3e50"/><stop offset="0.7" stop-color="#3e4254"/><stop offset="1" stop-color="#424658"/></linearGradient><linearGradient id="tshadow" x1="0" y1="0" x2="1" y2="0"><stop offset="0" stop-color="#1a1c2a" stop-opacity="0"/><stop offset="1" stop-color="#1a1c2a" stop-opacity="0.3"/></linearGradient><filter id="tbl" x="-5%" y="-50%" width="110%" height="200%"><feGaussianBlur stdDeviation="0.9"/></filter></defs><path d="M102.8 91.4 L319.5 68.3 L406.0 59.0 L406.0 299.0 L319.5 311.9 L131.6 337.0 L108.0 337.0 L66.0 206.0Z" fill="url(#tb)"/><path d="M102.8 91.4 L319.5 68.3 L406.0 59.0 L406.0 79.0 L319.5 84.2 L166.0 93.4 L102.8 95.4Z" fill="#4f5468"/><path d="M102.8 91.4 L319.5 68.3 L406.0 59.0 L406.0 78.0 L319.5 83.3 L166.0 92.7 L102.8 94.9Z" fill="#474b5e"/><path d="M102.8 91.4 L319.5 68.3 L406.0 59.0 L406.0 77.0 L319.5 82.4 L166.0 92.0 L102.8 94.4Z" fill="url(#tband)"/><rect x="271" y="56" width="60" height="270" fill="url(#tshadow)"/><path d="M96 92.1L319.5 68.30000000000001L406 59V46H96Z" fill="#02021e"/><path d="M131.60000000000002 337L319.5 311.9L406 299V346H131.60000000000002Z" fill="#02021e"/><path d="M87.5 93.7 L89.0 93.2 L90.6 92.8 L92.3 92.4 L94.2 92.2 L96.1 91.9 L98.2 91.8 L100.5 91.7 L102.8 91.6 L105.4 91.6 L108.2 91.6 L111.3 91.7 L114.4 91.9 L117.5 92.1 L120.6 92.3 L123.4 92.4 L126.0 92.6 L128.3 92.7 L130.3 92.9 L132.2 93.0 L134.0 93.1 L135.8 93.3 L137.5 93.4 L139.4 93.6 L141.3 93.8 L143.4 94.0 L145.7 94.3 L148.0 94.5 L150.4 94.8 L152.6 95.1 L154.8 95.4 L156.8 95.7 L158.5 96.0 L160.0 96.3 L161.3 96.7 L162.4 97.1 L163.4 97.5 L164.2 97.9 L165.0 98.3 L165.8 98.7 L166.5 99.2 L167.2 99.7 L167.8 100.2 L168.4 100.7 L168.9 101.2 L169.3 101.8 L169.6 102.4 L169.7 103.0 L169.8 103.6 L169.7 104.2 L169.4 104.9 L168.9 105.5 L168.4 106.2 L167.8 107.0 L167.2 107.8 L166.7 108.6 L166.2 109.6 L165.7 110.6 L165.2 111.6 L164.6 112.6 L164.1 113.6 L163.6 114.9 L163.2 116.3 L163.0 117.9 L163.0 119.8 L163.2 122.0 L163.6 124.3 L164.1 126.8 L164.8 129.5 L165.5 132.5 L166.3 135.7 L167.2 139.1 L168.1 142.8 L169.1 146.9 L170.2 151.3 L171.4 156.1 L172.7 161.1 L174.0 166.2 L175.2 171.3 L176.5 176.4 L177.7 181.3 L178.9 186.2 L180.1 191.1 L181.3 196.0 L182.5 201.0 L183.6 205.9 L184.7 210.6 L185.7 215.3 L186.6 219.7 L187.4 224.0 L188.2 228.1 L188.9 232.1 L189.5 236.0 L190.1 239.8 L190.5 243.4 L190.9 247.0 L191.2 250.4 L191.4 253.7 L191.5 256.7 L191.6 259.6 L191.5 262.4 L191.4 265.2 L191.2 267.9 L190.8 270.7 L190.4 273.5 L189.9 276.4 L189.3 279.3 L188.5 282.3 L187.7 285.2 L186.8 288.2 L185.8 291.0 L184.7 293.8 L183.5 296.5 L182.2 299.1 L180.7 301.7 L179.1 304.2 L177.4 306.7 L175.7 309.1 L173.9 311.4 L172.0 313.6 L170.1 315.7 L168.2 317.7 L166.1 319.6 L164.1 321.4 L161.9 323.2 L159.7 324.8 L157.5 326.4 L155.2 327.8 L152.8 329.2 L150.3 330.5 L147.8 331.7 L145.2 332.8 L142.6 333.8 L139.9 334.8 L137.1 335.6 L134.4 336.3 L131.6 336.8 L128.8 337.2 L126.0 337.6 L123.2 337.8 L120.3 337.9 L117.5 337.8 L114.5 337.7 L111.6 337.3 L108.6 336.8 L105.5 336.1 L102.4 335.3 L99.2 334.3 L96.0 333.2 L92.8 331.9 L89.6 330.5 L86.6 328.9 L83.6 327.2 L80.7 325.3 L77.9 323.3 L75.2 321.0 L72.5 318.7 L69.8 316.2 L67.3 313.6 L64.8 310.8 L62.5 308.0 L60.2 305.0 L58.0 301.8 L55.9 298.5 L53.9 295.0 L52.0 291.5 L50.2 288.0 L48.6 284.5 L47.1 281.1 L45.8 277.8 L44.7 274.5 L43.7 271.2 L42.8 267.9 L42.1 264.6 L41.5 261.3 L41.0 257.8 L40.6 254.3 L40.4 250.7 L40.3 247.0 L40.3 243.2 L40.5 239.4 L40.8 235.5 L41.2 231.6 L41.6 227.6 L42.1 223.5 L42.7 219.4 L43.3 215.2 L44.1 211.0 L44.9 206.7 L45.8 202.4 L46.8 198.0 L47.9 193.5 L49.0 189.0 L50.2 184.4 L51.5 179.6 L52.9 174.7 L54.4 169.8 L55.9 164.8 L57.5 159.9 L59.0 155.1 L60.6 150.5 L62.2 145.9 L64.0 141.1 L65.8 136.4 L67.7 131.8 L69.5 127.4 L71.1 123.2 L72.7 119.4 L74.0 116.0 L75.1 113.1 L75.9 110.6 L76.6 108.5 L77.3 106.6 L77.8 104.9 L78.4 103.4 L79.0 102.0 L79.8 100.6 L80.6 99.3 L81.4 98.2 L82.2 97.2 L83.1 96.3 L84.0 95.6 L85.0 94.9 L86.2 94.3Z" fill="#6b7186"/><path d="M89.1 98.0 L90.3 97.6 L91.6 97.2 L93.1 97.0 L94.7 96.7 L96.6 96.5 L98.5 96.4 L100.7 96.3 L102.9 96.2 L105.4 96.2 L108.1 96.2 L111.1 96.3 L114.2 96.5 L117.3 96.7 L120.3 96.9 L123.1 97.0 L125.7 97.2 L128.0 97.3 L130.0 97.5 L131.9 97.6 L133.7 97.7 L135.4 97.9 L137.1 98.0 L138.9 98.2 L140.8 98.4 L142.9 98.6 L145.2 98.8 L147.5 99.1 L149.8 99.3 L152.0 99.6 L154.1 99.9 L156.0 100.2 L157.6 100.5 L158.8 100.8 L159.9 101.1 L160.8 101.4 L161.6 101.7 L162.2 102.0 L162.8 102.3 L163.4 102.6 L163.9 103.0 L164.4 103.4 L164.9 103.7 L165.1 104.0 L165.3 104.1 L165.4 104.2 L165.3 104.1 L165.2 103.8 L165.2 103.3 L165.3 102.8 L165.4 102.6 L165.2 102.9 L164.8 103.4 L164.2 104.2 L163.4 105.2 L162.7 106.4 L162.1 107.6 L161.6 108.5 L161.2 109.3 L160.6 110.4 L159.9 111.8 L159.2 113.4 L158.7 115.4 L158.4 117.6 L158.4 120.0 L158.6 122.6 L159.1 125.1 L159.6 127.8 L160.3 130.6 L161.0 133.6 L161.9 136.8 L162.7 140.2 L163.6 143.9 L164.6 148.0 L165.7 152.5 L166.9 157.2 L168.2 162.2 L169.5 167.3 L170.8 172.4 L172.0 177.5 L173.2 182.4 L174.4 187.2 L175.6 192.2 L176.8 197.1 L178.0 202.0 L179.1 206.9 L180.2 211.6 L181.2 216.2 L182.1 220.6 L182.9 224.8 L183.7 228.9 L184.3 232.9 L185.0 236.7 L185.5 240.4 L186.0 244.0 L186.3 247.4 L186.6 250.7 L186.8 253.9 L186.9 256.8 L187.0 259.6 L186.9 262.3 L186.8 264.9 L186.6 267.4 L186.3 270.1 L185.9 272.7 L185.4 275.5 L184.8 278.3 L184.1 281.2 L183.3 284.0 L182.5 286.7 L181.5 289.4 L180.5 292.0 L179.4 294.5 L178.1 296.9 L176.7 299.3 L175.3 301.7 L173.7 304.0 L172.0 306.3 L170.3 308.5 L168.5 310.6 L166.7 312.5 L164.9 314.4 L163.0 316.2 L161.1 317.9 L159.1 319.6 L157.1 321.1 L155.0 322.5 L152.8 323.9 L150.6 325.2 L148.3 326.4 L145.9 327.5 L143.5 328.6 L141.0 329.5 L138.5 330.4 L135.9 331.1 L133.4 331.8 L130.8 332.3 L128.2 332.7 L125.6 333.0 L122.9 333.2 L120.3 333.3 L117.6 333.2 L114.9 333.1 L112.2 332.8 L109.5 332.3 L106.6 331.7 L103.7 330.9 L100.6 330.0 L97.6 328.9 L94.6 327.7 L91.6 326.4 L88.8 324.9 L86.0 323.3 L83.4 321.5 L80.7 319.6 L78.1 317.5 L75.5 315.3 L73.1 312.9 L70.6 310.4 L68.3 307.8 L66.1 305.2 L64.0 302.3 L61.9 299.3 L59.8 296.1 L57.9 292.8 L56.0 289.4 L54.3 286.0 L52.8 282.6 L51.4 279.4 L50.1 276.2 L49.0 273.1 L48.1 270.0 L47.3 266.9 L46.6 263.7 L46.0 260.5 L45.5 257.3 L45.2 253.9 L45.0 250.5 L44.9 247.0 L44.9 243.3 L45.1 239.7 L45.4 235.9 L45.7 232.0 L46.2 228.1 L46.7 224.1 L47.2 220.1 L47.9 216.0 L48.6 211.9 L49.4 207.6 L50.3 203.4 L51.3 199.0 L52.3 194.6 L53.5 190.1 L54.7 185.5 L56.0 180.8 L57.3 176.0 L58.8 171.1 L60.3 166.2 L61.8 161.3 L63.4 156.6 L64.9 152.0 L66.6 147.4 L68.3 142.8 L70.1 138.1 L71.9 133.5 L73.7 129.1 L75.4 124.9 L77.0 121.1 L78.3 117.6 L79.4 114.7 L80.3 112.1 L81.0 109.9 L81.6 108.0 L82.1 106.5 L82.6 105.2 L83.1 104.0 L83.8 102.9 L84.5 101.8 L85.1 100.9 L85.7 100.2 L86.2 99.7 L86.7 99.3 L87.3 98.9 L88.1 98.4Z" fill="url(#tf)" stroke="#4a4e60" stroke-width="0.8"/><path d="M87.5 93.7 L89.0 93.2 L90.6 92.8 L92.3 92.4 L94.2 92.2 L96.1 91.9 L98.2 91.8 L100.5 91.7 L102.8 91.6 L105.4 91.6 L108.2 91.6 L111.3 91.7 L114.4 91.9 L117.5 92.1 L120.6 92.3 L123.4 92.4 L126.0 92.6 L128.3 92.7 L130.3 92.9 L132.2 93.0 L134.0 93.1 L135.8 93.3 L137.5 93.4 L139.4 93.6 L141.3 93.8 L143.4 94.0 L145.7 94.3 L148.0 94.5 L150.4 94.8 L152.6 95.1 L154.8 95.4 L156.8 95.7 L158.5 96.0 L160.0 96.3 L161.3 96.7 L162.4 97.1 L163.4 97.5 L164.2 97.9 L165.0 98.3 L165.8 98.7 L166.5 99.2 L167.2 99.7 L167.8 100.2 L168.4 100.7 L168.9 101.2 L169.3 101.8 L169.6 102.4 L169.7 103.0 L169.8 103.6 L169.7 104.2 L169.4 104.9 L168.9 105.5 L168.4 106.2 L167.8 107.0 L167.2 107.8 L166.7 108.6 L166.2 109.6 L165.7 110.6 L165.2 111.6 L164.6 112.6 L164.1 113.6 L163.6 114.9 L163.2 116.3 L163.0 117.9 L163.0 119.8 L163.2 122.0 L163.6 124.3 L164.1 126.8 L164.8 129.5 L165.5 132.5 L166.3 135.7 L167.2 139.1 L168.1 142.8 L169.1 146.9 L170.2 151.3 L171.4 156.1 L172.7 161.1 L174.0 166.2 L175.2 171.3 L176.5 176.4 L177.7 181.3 L178.9 186.2 L180.1 191.1 L181.3 196.0 L182.5 201.0 L183.6 205.9 L184.7 210.6 L185.7 215.3 L186.6 219.7 L187.4 224.0 L188.2 228.1 L188.9 232.1 L189.5 236.0 L190.1 239.8 L190.5 243.4 L190.9 247.0 L191.2 250.4 L191.4 253.7 L191.5 256.7 L191.6 259.6 L191.5 262.4 L191.4 265.2 L191.2 267.9 L190.8 270.7 L190.4 273.5 L189.9 276.4 L189.3 279.3 L188.5 282.3 L187.7 285.2 L186.8 288.2 L185.8 291.0 L184.7 293.8 L183.5 296.5 L182.2 299.1 L180.7 301.7 L179.1 304.2 L177.4 306.7 L175.7 309.1 L173.9 311.4 L172.0 313.6 L170.1 315.7 L168.2 317.7 L166.1 319.6 L164.1 321.4 L161.9 323.2 L159.7 324.8 L157.5 326.4 L155.2 327.8 L152.8 329.2 L150.3 330.5 L147.8 331.7 L145.2 332.8 L142.6 333.8 L139.9 334.8 L137.1 335.6 L134.4 336.3 L131.6 336.8 L128.8 337.2 L126.0 337.6 L123.2 337.8 L120.3 337.9 L117.5 337.8 L114.5 337.7 L111.6 337.3 L108.6 336.8 L105.5 336.1 L102.4 335.3 L99.2 334.3 L96.0 333.2 L92.8 331.9 L89.6 330.5 L86.6 328.9 L83.6 327.2 L80.7 325.3 L77.9 323.3 L75.2 321.0 L72.5 318.7 L69.8 316.2 L67.3 313.6 L64.8 310.8 L62.5 308.0 L60.2 305.0 L58.0 301.8 L55.9 298.5 L53.9 295.0 L52.0 291.5 L50.2 288.0 L48.6 284.5 L47.1 281.1 L45.8 277.8 L44.7 274.5 L43.7 271.2 L42.8 267.9 L42.1 264.6 L41.5 261.3 L41.0 257.8 L40.6 254.3 L40.4 250.7 L40.3 247.0 L40.3 243.2 L40.5 239.4 L40.8 235.5 L41.2 231.6 L41.6 227.6 L42.1 223.5 L42.7 219.4 L43.3 215.2 L44.1 211.0 L44.9 206.7 L45.8 202.4 L46.8 198.0 L47.9 193.5 L49.0 189.0 L50.2 184.4 L51.5 179.6 L52.9 174.7 L54.4 169.8 L55.9 164.8 L57.5 159.9 L59.0 155.1 L60.6 150.5 L62.2 145.9 L64.0 141.1 L65.8 136.4 L67.7 131.8 L69.5 127.4 L71.1 123.2 L72.7 119.4 L74.0 116.0 L75.1 113.1 L75.9 110.6 L76.6 108.5 L77.3 106.6 L77.8 104.9 L78.4 103.4 L79.0 102.0 L79.8 100.6 L80.6 99.3 L81.4 98.2 L82.2 97.2 L83.1 96.3 L84.0 95.6 L85.0 94.9 L86.2 94.3Z" fill="none" stroke="#8ee02a" stroke-width="1.1"/><path d="M116.60000000000002 87V91.6M115.39999999999998 88L116.60000000000002 87" stroke="#e8e23a" stroke-width="1" fill="none"/><path d="M28.6 4.2 L29.4 4.1 L30.5 4.0 L31.7 4.0 L32.9 4.1 L34.1 4.1 L35.3 4.1 L36.5 4.1 L37.7 4.1 L38.9 4.0 L40.1 4.0 L41.1 4.1 L42.0 4.2 L42.6 4.4 L43.1 4.6 L43.4 4.8 L43.7 5.1 L43.9 5.4 L44.2 5.8 L44.4 6.2 L44.6 6.6 L44.8 7.0 L44.9 7.5 L45.1 8.1 L45.4 9.0 L45.7 10.1 L46.1 11.4 L46.5 12.9 L46.9 14.4 L47.4 16.0 L47.8 17.5 L48.2 19.1 L48.7 20.7 L49.2 22.4 L49.7 24.1 L50.1 25.6 L50.4 27.0 L50.6 28.1 L50.8 29.1 L50.9 30.0 L51.0 30.8 L51.0 31.6 L50.9 32.5 L50.7 33.5 L50.5 34.6 L50.2 35.6 L49.8 36.7 L49.4 37.7 L48.8 38.7 L48.1 39.6 L47.3 40.6 L46.5 41.5 L45.5 42.3 L44.5 43.1 L43.4 43.7 L42.2 44.2 L40.9 44.7 L39.6 45.1 L38.2 45.4 L36.8 45.5 L35.4 45.6 L34.0 45.5 L32.7 45.4 L31.3 45.1 L29.9 44.7 L28.7 44.2 L27.5 43.7 L26.4 43.1 L25.4 42.3 L24.4 41.5 L23.5 40.6 L22.8 39.6 L22.1 38.7 L21.6 37.7 L21.1 36.7 L20.8 35.6 L20.6 34.6 L20.4 33.5 L20.3 32.5 L20.2 31.6 L20.2 30.8 L20.3 30.0 L20.4 29.1 L20.6 28.1 L20.8 27.0 L21.1 25.6 L21.6 24.1 L22.1 22.4 L22.6 20.7 L23.2 19.1 L23.6 17.5 L24.0 16.0 L24.4 14.4 L24.7 12.9 L25.0 11.4 L25.3 10.1 L25.6 9.0 L25.8 8.1 L26.0 7.5 L26.1 7.0 L26.2 6.6 L26.4 6.2 L26.6 5.8 L26.8 5.4 L27.0 5.1 L27.2 4.8 L27.5 4.6 L28.0 4.4Z" fill="none" stroke="#c8102a" stroke-width="1"/></svg>
<div class="t" style="left:247.00px;top:142.60px;font-size:10px;line-height:12px;color:#eeee34;font-family:'Liberation Mono',monospace;transform:scaleX(0.972);transform-origin:left center;">Part:1y006-b-01</div>
<svg class="b" style="left:340.30px;top:143.00px" width="21.0" height="10" viewBox="0 0 21 10" fill="none" stroke="#eeee34" stroke-width="1.00" stroke-linecap="round" stroke-linejoin="round"><path d="M0.6 3H4.6M2.6 0.6V9.6M2.6 3.6L0.6 7M2.8 3.8L4.6 5.6M6 1.2H8.4V8.2Q8.4 9.2 9.6 9V7.6M6 1.2V5.5Q6 8 4.8 9.6"/><path transform="translate(11 0)" d="M3.4 0.6L2.4 2M2.6 2H7.6V7.6M2.6 2V6M2.6 3.9H7.6M2.6 5.9H7.6M0.6 7.6L7.6 6.6M8.8 4.6L1 9.6M7.6 7.6V8.6Q7.6 9.6 6.2 9.4"/></svg>
<div class="t" style="left:362.40px;top:142.60px;font-size:10px;line-height:12px;color:#eeee34;font-family:'Liberation Mono',monospace;transform:scaleX(0.972);transform-origin:left center;">-20pcs(1)</div>
<div class="t" style="left:247.00px;top:154.90px;font-size:10px;line-height:12px;color:#eeee34;font-family:'Liberation Mono',monospace;transform:scaleX(0.954);transform-origin:left center;">Non-standard profile tube Width26xHeight40 T0.995 L98</div>
<div class="b" style="left:214.30px;top:467.20px;width:640.00px;height:13.00px;background:#f0f0f0;"></div>
<div class="b" style="left:214.30px;top:480.30px;width:640.00px;height:14.00px;background:#f0f0f0;"></div>
<div class="b" style="left:215.00px;top:480.30px;width:53.00px;height:14.00px;background:#e4e4e4;"></div>
<div class="t" style="left:221.30px;top:482.40px;font-size:9px;line-height:11px;color:#1e1e1e;transform:scaleX(0.985);transform-origin:left center;">Nest List</div>
<svg class="b" style="left:274.10px;top:481.00px;overflow:visible" width="12.4" height="12.4" viewBox="0 0 12.4 12.4" fill="none" stroke-linecap="round" stroke-linejoin="round"><circle cx="6.2" cy="6.2" r="5.2" stroke="#444" stroke-width="0.9"/><path d="M6.2 3.50V8.90M3.50 6.2H8.90" stroke="#444" stroke-width="0.9"/></svg>
<svg class="b" style="left:296.00px;top:486.05px" width="3.6" height="2.3"><path d="M0 0L3.6 0L1.8 2.3Z" fill="#222"/></svg>
<svg class="b" style="left:310.86px;top:483.06px;overflow:visible" width="8.280000000000001" height="8.280000000000001" viewBox="0 0 8.280000000000001 8.280000000000001" fill="none" stroke-linecap="round" stroke-linejoin="round"><g transform="scale(0.92)"><path d="M0.6 0.6L8.4 3.2L5.2 4.6L7.8 7.6M0.6 0.6L3 8.2L4.4 5" stroke="#999" stroke-width="0.8"/></g></svg>
<svg class="b" style="left:330.80px;top:486.05px" width="3.6" height="2.3"><path d="M0 0L3.6 0L1.8 2.3Z" fill="#222"/></svg>
<svg class="b" style="left:345.73px;top:482.06px;overflow:visible" width="8.549999999999999" height="9.879999999999999" viewBox="0 0 8.549999999999999 9.879999999999999" fill="none" stroke-linecap="round" stroke-linejoin="round"><g transform="scale(0.95)"><path d="M0.5 1.8H8.5M3 1.6V0.6H6V1.6M1.3 2V8.6Q1.3 9.8 2.5 9.8H6.5Q7.7 9.8 7.7 8.6V2M3.4 3.6V8M5.6 3.6V8" stroke="#555" stroke-width="0.85"/></g></svg>
<svg class="b" style="left:366.20px;top:486.05px" width="3.6" height="2.3"><path d="M0 0L3.6 0L1.8 2.3Z" fill="#222"/></svg>
<svg class="b" style="left:381.86px;top:482.40px;overflow:visible" width="8.280000000000001" height="9.200000000000001" viewBox="0 0 8.280000000000001 9.200000000000001" fill="none" stroke-linecap="round" stroke-linejoin="round"><g transform="scale(0.92)"><path d="M0.6 0.6H8.4M4.5 2.4V9.6M1.2 5.4L4.5 2.2L7.8 5.4" stroke="#666" stroke-width="0.85"/></g></svg>
<svg class="b" style="left:402.20px;top:486.05px" width="3.6" height="2.3"><path d="M0 0L3.6 0L1.8 2.3Z" fill="#222"/></svg>
<div class="b" style="left:413.00px;top:481.50px;width:121.50px;height:11.80px;background:#fff;border:1px solid #d8d8e2;"></div>
<div class="t" style="left:416.50px;top:482.50px;font-size:9px;line-height:11px;color:#9a9a9a;">Input Search Content</div>
<div class="b" style="left:214.30px;top:494.40px;width:640.00px;height:136.50px;background:#fff;"></div>
<div class="b" style="left:215.00px;top:494.40px;width:340.00px;height:13.00px;background:#f6f6fa;border-top:1px solid #d9d9ec;border-bottom:1px solid #d9d9ec;"></div>
<div class="b" style="left:253.50px;top:495.00px;width:1.00px;height:12.00px;background:#d4d4e6;"></div>
<div class="b" style="left:396.00px;top:495.00px;width:1.00px;height:12.00px;background:#d4d4e6;"></div>
<div class="b" style="left:460.50px;top:495.00px;width:1.00px;height:12.00px;background:#d4d4e6;"></div>
<div class="b" style="left:524.80px;top:495.00px;width:1.00px;height:12.00px;background:#d4d4e6;"></div>
<div class="b" style="left:226.50px;top:498.00px;width:6.50px;height:6.50px;background:#fff;border:1px solid #999;"></div>
<div class="b" style="left:228.40px;top:499.90px;width:2.70px;height:2.70px;background:#111;"></div>
<div class="t" style="left:315.75px;top:496.20px;font-size:9px;line-height:11px;color:#1e1e1e;transform:scaleX(1.027);transform-origin:center center;">Nest</div>
<div class="t" style="left:410.08px;top:496.20px;font-size:9px;line-height:11px;color:#1e1e1e;transform:scaleX(1.018);transform-origin:center center;">Nest Qty.</div>
<div class="t" style="left:475.08px;top:496.20px;font-size:9px;line-height:11px;color:#1e1e1e;">Part Qty.</div>
<div class="t" style="left:531.80px;top:496.20px;font-size:9px;line-height:11px;color:#1e1e1e;transform:scaleX(1.052);transform-origin:left center;">Total</div>
<div class="b" style="left:214.50px;top:631.20px;width:640.00px;height:4.00px;background:#e9e9e9;"></div>
<div class="b" style="left:836.00px;top:467.00px;width:10.00px;height:168.00px;background:#f0f0f0;"></div>
<svg class="b" style="left:836.8px;top:624px" width="5" height="3.5"><path d="M0 0L5 0L2.5 3.5Z" fill="#777"/></svg>
<div class="b" style="left:845.50px;top:467.00px;width:1.00px;height:168.00px;background:#d8d8d8;"></div>
<div class="b" style="left:846.50px;top:93.50px;width:267.00px;height:541.00px;background:#f5f5f5;"></div>
<div class="b" style="left:850.30px;top:500.00px;width:254.50px;height:126.80px;background:#f0f0f0;border:1px solid #dadada;"></div>
<div class="b" style="left:1093.00px;top:93.50px;width:19.00px;height:150.00px;background:#e9e9e9;"></div>
<div class="b" style="left:1093.00px;top:243.00px;width:19.00px;height:255.00px;background:#ededed;"></div>
<div class="b" style="left:1093.00px;top:498.00px;width:12.00px;height:38.00px;background:#e4e4e4;"></div>
<div class="b" style="left:1093.00px;top:483.00px;width:19.00px;height:1.00px;background:#d0d0d0;"></div>
<div class="t" style="left:1093.20px;top:516.30px;font-size:9px;line-height:11px;color:#e8912a;transform:scaleX(0.750);transform-origin:left center;">e s</div>
<div class="t" style="left:1093.00px;top:531.00px;font-size:9px;line-height:11px;color:#333;transform:scaleX(0.916);transform-origin:left center;">nal</div>
<div class="b" style="left:553.00px;top:34.50px;width:540.00px;height:553.70px;background:transparent;box-shadow:-6px 8px 24px 0px rgba(0,0,0,0.42);"></div>
<div class="b" style="left:553.00px;top:34.50px;width:540.00px;height:14.30px;background:#f2f2f2;"></div>
<div class="b" style="left:556.2px;top:35.8px;width:9.4px;height:9px;border-radius:2px;background:linear-gradient(40deg,#0c8ee6 0%,#10b4a8 45%,#18de38 100%);"></div>
<svg class="b" style="left:557.60px;top:37.00px;overflow:visible" width="6.6" height="6.6" viewBox="0 0 6.6 6.6" fill="none" stroke-linecap="round" stroke-linejoin="round"><path d="M0.7 0.7H5.9V5.9H0.7ZM2 2V4.6M3.2 2H4.8V3.2H3.4V4.6H4.8" stroke="#c8f4e6" stroke-width="0.6"/></svg>
<div class="t" style="left:756.49px;top:36.50px;font-size:9px;line-height:11px;color:#1e1e1e;transform:scaleX(1.008);transform-origin:center center;">Profile Normal</div>
<svg class="b" style="left:1016.00px;top:40.60px;overflow:visible" width="7" height="1" viewBox="0 0 7 1" fill="none" stroke-linecap="round" stroke-linejoin="round"><path d="M0 0.5H7" stroke="#aaa" stroke-width="1"/></svg>
<svg class="b" style="left:1045.60px;top:38.00px;overflow:visible" width="7" height="6.4" viewBox="0 0 7 6.4" fill="none" stroke-linecap="round" stroke-linejoin="round"><rect x="0.5" y="0.5" width="6" height="5.4" stroke="#666" stroke-width="0.8"/></svg>
<svg class="b" style="left:1075.80px;top:38.40px;overflow:visible" width="6" height="5.8" viewBox="0 0 6 5.8" fill="none" stroke-linecap="round" stroke-linejoin="round"><path d="M0.4 0.4L5.6 5.4M5.6 0.4L0.4 5.4" stroke="#666" stroke-width="0.8"/></svg>
<div class="b" style="left:553.00px;top:48.80px;width:540.00px;height:54.00px;background:#f5f5f5;"></div>
<div class="b" style="left:1085.80px;top:50.00px;width:7.20px;height:52.70px;background:#ececec;border-left:1px solid #e0e0e0;"></div>
<div class="b" style="left:1086.50px;top:56.00px;width:5.50px;height:38.00px;background:#f8f8f8;"></div>
<div class="t" style="left:555.50px;top:58.20px;font-size:9px;line-height:11px;color:#1e1e1e;transform:scaleX(1.008);transform-origin:left center;">Cutting Head:</div>
<div class="b" style="left:617.00px;top:56.80px;width:58.00px;height:12.60px;background:#e9e9e9;border:1px solid #dadada;border-radius:2px;"></div>
<div class="t" style="left:621.00px;top:58.20px;font-size:9px;line-height:11px;color:#1e1e1e;transform:scaleX(0.947);transform-origin:left center;">LC40-F200I</div>
<svg class="b" style="left:666.20px;top:61.40px;overflow:visible" width="6.4" height="3.6" viewBox="0 0 6.4 3.6" fill="none" stroke-linecap="round" stroke-linejoin="round"><path d="M0.3 0.3L3.2 3.2L6.1000000000000005 0.3" stroke="#333" stroke-width="0.8"/></svg>
<div class="t" style="left:555.50px;top:78.00px;font-size:9px;line-height:11px;color:#1e1e1e;transform:scaleX(1.008);transform-origin:left center;">Follow Height:</div>
<div class="b" style="left:619.50px;top:76.60px;width:57.60px;height:13.20px;background:#e4e4e4;border:1px solid #d0d0d0;border-radius:2px;"></div>
<div class="t" style="left:624.00px;top:78.20px;font-size:9px;line-height:11px;color:#1e1e1e;">1</div>
<div class="b" style="left:684.00px;top:76.80px;width:57.60px;height:13.00px;background:linear-gradient(#f4f4f4,#dedede);border:1px solid #b8b8b8;border-radius:3px;box-shadow:0 1px 1px rgba(0,0,0,0.25);"></div>
<div class="t" style="left:700.84px;top:78.30px;font-size:9px;line-height:11px;color:#1e1e1e;transform:scaleX(0.978);transform-origin:center center;">Setup</div>
<div class="b" style="left:746.80px;top:56.80px;width:68.00px;height:12.80px;background:linear-gradient(#f4f4f4,#dedede);border:1px solid #b8b8b8;border-radius:3px;box-shadow:0 1px 1px rgba(0,0,0,0.25);"></div>
<div class="t" style="left:767.59px;top:58.30px;font-size:9px;line-height:11px;color:#1e1e1e;">Export</div>
<div class="b" style="left:746.80px;top:76.80px;width:68.00px;height:13.00px;background:linear-gradient(#f4f4f4,#dedede);border:1px solid #b8b8b8;border-radius:3px;box-shadow:0 1px 1px rgba(0,0,0,0.25);"></div>
<div class="t" style="left:767.85px;top:78.30px;font-size:9px;line-height:11px;color:#1e1e1e;transform:scaleX(1.059);transform-origin:center center;">Import</div>
<div class="t" style="left:622.48px;top:90.80px;font-size:9px;line-height:11px;color:#1e1e1e;transform:scaleX(1.019);transform-origin:center center;">Cutting head</div>
<div class="t" style="left:753.24px;top:90.80px;font-size:9px;line-height:11px;color:#1e1e1e;">Template File</div>
<div class="b" style="left:743.50px;top:52.00px;width:1.00px;height:48.00px;background:#dcdcdc;"></div>
<div class="b" style="left:816.70px;top:52.00px;width:1.00px;height:48.00px;background:#dcdcdc;"></div>
<div class="b" style="left:1025.50px;top:52.00px;width:1.00px;height:48.00px;background:#dcdcdc;"></div>
<div class="t" style="left:821.49px;top:71.20px;font-size:9px;line-height:11px;color:#1e1e1e;transform:scaleX(1.014);transform-origin:center center;">Collision</div>
<div class="t" style="left:825.74px;top:81.20px;font-size:9px;line-height:11px;color:#1e1e1e;transform:scaleX(0.941);transform-origin:center center;">Check</div>
<div class="t" style="left:859.74px;top:71.20px;font-size:9px;line-height:11px;color:#1e1e1e;transform:scaleX(1.038);transform-origin:center center;">Anti-Collision</div>
<svg class="b" style="left:884.40px;top:85.20px" width="3" height="2"><path d="M0 0L3 0L1.5 2Z" fill="#333"/></svg>
<div class="t" style="left:918.24px;top:71.20px;font-size:9px;line-height:11px;color:#1e1e1e;transform:scaleX(0.984);transform-origin:center center;">Restore</div>
<div class="t" style="left:919.50px;top:81.20px;font-size:9px;line-height:11px;color:#1e1e1e;">Normal</div>
<div class="t" style="left:955.49px;top:71.20px;font-size:9px;line-height:11px;color:#1e1e1e;transform:scaleX(1.032);transform-origin:center center;">Upward</div>
<div class="t" style="left:960.49px;top:81.20px;font-size:9px;line-height:11px;color:#1e1e1e;transform:scaleX(0.952);transform-origin:center center;">Copy</div>
<div class="t" style="left:994.99px;top:71.20px;font-size:9px;line-height:11px;color:#1e1e1e;">Down</div>
<div class="t" style="left:995.99px;top:81.20px;font-size:9px;line-height:11px;color:#1e1e1e;transform:scaleX(0.952);transform-origin:center center;">Copy</div>
<div class="b" style="left:955.00px;top:88.90px;width:68.00px;height:2.20px;background:#f5f5f5;"></div>
<div class="t" style="left:882.98px;top:90.70px;font-size:9px;line-height:11px;color:#1e1e1e;transform:scaleX(1.026);transform-origin:center center;">Normal Adjustment</div>
<div class="t" style="left:1039.80px;top:71.20px;font-size:9px;line-height:11px;color:#1e1e1e;transform:scaleX(0.961);transform-origin:center center;">OK</div>
<div class="t" style="left:1068.00px;top:71.20px;font-size:9px;line-height:11px;color:#1e1e1e;transform:scaleX(0.969);transform-origin:left center;">Can</div>
<div class="t" style="left:1038.80px;top:90.60px;font-size:9px;line-height:11px;color:#1e1e1e;transform:scaleX(1.065);transform-origin:left center;">Completion</div>
<svg class="b" style="left:829.00px;top:52.00px;overflow:visible" width="19" height="17" viewBox="0 0 19 17" fill="none" stroke-linecap="round" stroke-linejoin="round"><path d="M17.2 1.4L9.4 9.4" stroke="#222" stroke-width="1.3"/><path d="M8.4 10.4L9.6 5.8L13 9.2Z" fill="#222" stroke="#222" stroke-width="0.6"/><rect x="1.1" y="10.2" width="6" height="5.6" stroke="#333" stroke-width="1.1"/><path d="M2.2 2.6L5.2 6.4M0.6 6.6L4.2 8M5.6 1.2L7 5" stroke="#f2b01e" stroke-width="1.2"/><path d="M9.6 11.8L14.6 11M9.4 13.6L14 15.6M8.6 15.2L11 17.6" stroke="#f2a21a" stroke-width="1.2"/></svg>
<svg class="b" style="left:877.00px;top:52.60px;overflow:visible" width="18" height="15" viewBox="0 0 18 15" fill="none" stroke-linecap="round" stroke-linejoin="round"><path d="M0.6 13.6H17.2" stroke="#f0b414" stroke-width="1.7" stroke-linecap="butt"/><path d="M14 5.4V13" stroke="#f0b414" stroke-width="1.5"/><circle cx="14" cy="3.3" r="1.8" stroke="#f0b414" stroke-width="1.2"/><circle cx="2.6" cy="3.4" r="1.7" stroke="#222" stroke-width="1.1"/><path d="M3.8 4.8L9.4 12.4M5.6 7.4L12.4 4.6" stroke="#222" stroke-width="1.2"/></svg>
<svg class="b" style="left:924.50px;top:53.40px;overflow:visible" width="19" height="16" viewBox="0 0 19 16" fill="none" stroke-linecap="round" stroke-linejoin="round"><path d="M1.4 1.2L6.4 6.2M6.4 6.2V2.2M6.4 6.2H2.4 M17.6 1.2L12.6 6.2M12.6 6.2V2.2M12.6 6.2H16.6 M1.4 15L6.4 10M6.4 10V14M6.4 10H2.4 M17.6 15L12.6 10M12.6 10V14M12.6 10H16.6" stroke="#333" stroke-width="1.0"/></svg>
<svg class="b" style="left:962.50px;top:53.00px;overflow:visible" width="17" height="17" viewBox="0 0 17 17" fill="none" stroke-linecap="round" stroke-linejoin="round"><path d="M1.6 3.6V14M0.4 5.2L1.6 3.2L2.8 5.2" stroke="#333" stroke-width="0.9"/><path d="M7 1H13V6.4M7 1L13 6.4M7 1V3.4M9.4 6.4H13" stroke="#2a9ae4" stroke-width="1"/><path d="M4.6 8.4H15.6" stroke="#bdbdbd" stroke-width="0.7" stroke-dasharray="1 0.7"/><path d="M7 10.4H13V15.8H7M13 10.6L7.2 15.6" stroke="#555" stroke-width="0.9"/></svg>
<svg class="b" style="left:998.60px;top:53.00px;overflow:visible" width="17" height="17" viewBox="0 0 17 17" fill="none" stroke-linecap="round" stroke-linejoin="round"><path d="M1.6 2.6V13M0.4 11.4L1.6 13.4L2.8 11.4" stroke="#333" stroke-width="0.9"/><path d="M7 1H13V6.4M7 1L13 6.4M7 1V3.4M9.4 6.4H13" stroke="#555" stroke-width="0.9"/><path d="M4.6 8.4H15.6" stroke="#bdbdbd" stroke-width="0.7" stroke-dasharray="1 0.7"/><path d="M7 10.4H13V15.8H7M13 10.6L7.2 15.6" stroke="#2a9ae4" stroke-width="1"/></svg>
<svg class="b" style="left:1037.00px;top:55.60px;overflow:visible" width="18" height="12" viewBox="0 0 18 12" fill="none" stroke-linecap="round" stroke-linejoin="round"><path d="M1 6.6L6.6 11L17 1" stroke="#3cb62c" stroke-width="1.9" stroke-linecap="butt"/></svg>
<div class="b" style="left:1072px;top:54px;width:13.8px;height:15px;overflow:hidden"><svg class="b" style="left:2.40px;top:1.80px;overflow:visible" width="11" height="11.4" viewBox="0 0 11 11.4" fill="none" stroke-linecap="round" stroke-linejoin="round"><path d="M0.8 0.8L10.4 10.6M10.4 0.8L0.8 10.6" stroke="#f01c1c" stroke-width="1.7" stroke-linecap="butt"/></svg></div>
<div class="b" style="left:1085.80px;top:49.00px;width:7.20px;height:53.70px;background:#f6f6f6;border-left:1px solid #e2e2e2;"></div>
<svg class="b" style="left:1087.60px;top:74.90px" width="2" height="3"><path d="M0 0L2 1.5L0 3Z" fill="#333"/></svg>
<div class="b" style="left:553.00px;top:102.70px;width:540.00px;height:473.50px;background:#000;"></div>
<svg class="b" style="left:553px;top:102.7px" width="540" height="473" viewBox="0 0 540 473"><path d="M12.1 8.5V6.5M16.1 8.5V6.9M20.2 8.5V6.5M24.2 8.5V6.9M28.3 8.5V1.5M32.3 8.5V6.9M36.4 8.5V6.5M40.4 8.5V6.9M44.5 8.5V6.5M48.5 8.5V6.9M52.6 8.5V6.5M56.6 8.5V6.9M60.7 8.5V6.5M64.7 8.5V6.9M68.8 8.5V1.5M72.8 8.5V6.9M76.9 8.5V6.5M80.9 8.5V6.9M85.0 8.5V6.5M89.0 8.5V6.9M93.1 8.5V6.5M97.1 8.5V6.9M101.2 8.5V6.5M105.2 8.5V6.9M109.3 8.5V1.5M113.3 8.5V6.9M117.4 8.5V6.5M121.4 8.5V6.9M125.5 8.5V6.5M129.5 8.5V6.9M133.6 8.5V6.5M137.6 8.5V6.9M141.7 8.5V6.5M145.7 8.5V6.9M149.8 8.5V1.5M153.8 8.5V6.9M157.9 8.5V6.5M161.9 8.5V6.9M166.0 8.5V6.5M170.0 8.5V6.9M174.1 8.5V6.5M178.1 8.5V6.9M182.2 8.5V6.5M186.2 8.5V6.9M190.3 8.5V1.5M194.3 8.5V6.9M198.4 8.5V6.5M202.4 8.5V6.9M206.5 8.5V6.5M210.5 8.5V6.9M214.6 8.5V6.5M218.6 8.5V6.9M222.7 8.5V6.5M226.7 8.5V6.9M230.8 8.5V1.5M234.8 8.5V6.9M238.9 8.5V6.5M242.9 8.5V6.9M247.0 8.5V6.5M251.0 8.5V6.9M255.1 8.5V6.5M259.1 8.5V6.9M263.2 8.5V6.5M267.2 8.5V6.9M271.3 8.5V1.5M275.3 8.5V6.9M279.4 8.5V6.5M283.4 8.5V6.9M287.5 8.5V6.5M291.5 8.5V6.9M295.6 8.5V6.5M299.6 8.5V6.9M303.7 8.5V6.5M307.7 8.5V6.9M311.8 8.5V1.5M315.8 8.5V6.9M319.9 8.5V6.5M323.9 8.5V6.9M328.0 8.5V6.5M332.0 8.5V6.9M336.1 8.5V6.5M340.1 8.5V6.9M344.2 8.5V6.5M348.2 8.5V6.9M352.3 8.5V1.5M356.3 8.5V6.9M360.4 8.5V6.5M364.4 8.5V6.9M368.5 8.5V6.5M372.5 8.5V6.9M376.6 8.5V6.5M380.6 8.5V6.9M384.7 8.5V6.5M388.7 8.5V6.9M392.8 8.5V1.5M396.8 8.5V6.9M400.9 8.5V6.5M404.9 8.5V6.9M409.0 8.5V6.5M413.0 8.5V6.9M417.1 8.5V6.5M421.1 8.5V6.9M425.2 8.5V6.5M429.2 8.5V6.9M433.3 8.5V1.5M437.3 8.5V6.9M441.4 8.5V6.5M445.4 8.5V6.9M449.5 8.5V6.5M453.5 8.5V6.9M457.6 8.5V6.5M461.6 8.5V6.9M465.7 8.5V6.5M469.7 8.5V6.9M473.8 8.5V1.5M477.8 8.5V6.9M481.9 8.5V6.5M485.9 8.5V6.9M490.0 8.5V6.5M494.0 8.5V6.9M498.1 8.5V6.5M502.1 8.5V6.9M506.2 8.5V6.5M510.2 8.5V6.9M514.3 8.5V1.5M518.3 8.5V6.9M522.4 8.5V6.5M526.4 8.5V6.9M530.5 8.5V6.5M534.5 8.5V6.9M538.6 8.5V6.5M8.6 8.5H540M8.4 11.6H6.4M8.4 15.3H6.8M8.4 19.0H6.4M8.4 22.7H6.8M8.4 26.4H1.4M8.4 30.1H6.8M8.4 33.8H6.4M8.4 37.5H6.8M8.4 41.2H6.4M8.4 44.9H6.8M8.4 48.5H6.4M8.4 52.2H6.8M8.4 55.9H6.4M8.4 59.6H6.8M8.4 63.3H1.4M8.4 67.0H6.8M8.4 70.7H6.4M8.4 74.4H6.8M8.4 78.1H6.4M8.4 81.7H6.8M8.4 85.4H6.4M8.4 89.1H6.8M8.4 92.8H6.4M8.4 96.5H6.8M8.4 100.2H1.4M8.4 103.9H6.8M8.4 107.6H6.4M8.4 111.3H6.8M8.4 115.0H6.4M8.4 118.6H6.8M8.4 122.3H6.4M8.4 126.0H6.8M8.4 129.7H6.4M8.4 133.4H6.8M8.4 137.1H1.4M8.4 140.8H6.8M8.4 144.5H6.4M8.4 148.2H6.8M8.4 151.9H6.4M8.4 155.6H6.8M8.4 159.2H6.4M8.4 162.9H6.8M8.4 166.6H6.4M8.4 170.3H6.8M8.4 174.0H1.4M8.4 177.7H6.8M8.4 181.4H6.4M8.4 185.1H6.8M8.4 188.8H6.4M8.4 192.4H6.8M8.4 196.1H6.4M8.4 199.8H6.8M8.4 203.5H6.4M8.4 207.2H6.8M8.4 210.9H1.4M8.4 214.6H6.8M8.4 218.3H6.4M8.4 222.0H6.8M8.4 225.7H6.4M8.4 229.4H6.8M8.4 233.0H6.4M8.4 236.7H6.8M8.4 240.4H6.4M8.4 244.1H6.8M8.4 247.8H1.4M8.4 251.5H6.8M8.4 255.2H6.4M8.4 258.9H6.8M8.4 262.6H6.4M8.4 266.2H6.8M8.4 269.9H6.4M8.4 273.6H6.8M8.4 277.3H6.4M8.4 281.0H6.8M8.4 284.7H1.4M8.4 288.4H6.8M8.4 292.1H6.4M8.4 295.8H6.8M8.4 299.5H6.4M8.4 303.1H6.8M8.4 306.8H6.4M8.4 310.5H6.8M8.4 314.2H6.4M8.4 317.9H6.8M8.4 321.6H1.4M8.4 325.3H6.8M8.4 329.0H6.4M8.4 332.7H6.8M8.4 336.4H6.4M8.4 340.1H6.8M8.4 343.7H6.4M8.4 347.4H6.8M8.4 351.1H6.4M8.4 354.8H6.8M8.4 358.5H1.4M8.4 362.2H6.8M8.4 365.9H6.4M8.4 369.6H6.8M8.4 373.3H6.4M8.4 376.9H6.8M8.4 380.6H6.4M8.4 384.3H6.8M8.4 388.0H6.4M8.4 391.7H6.8M8.4 395.4H1.4M8.4 399.1H6.8M8.4 402.8H6.4M8.4 406.5H6.8M8.4 410.2H6.4M8.4 413.9H6.8M8.4 417.5H6.4M8.4 421.2H6.8M8.4 424.9H6.4M8.4 428.6H6.8M8.4 432.3H1.4M8.4 436.0H6.8M8.4 439.7H6.4M8.4 443.4H6.8M8.4 447.1H6.4M8.4 450.8H6.8M8.4 454.4H6.4M8.4 458.1H6.8M8.4 461.8H6.4M8.4 465.5H6.8M8.4 469.2H1.4M8.4 8.5V472.6M1 8.5H8.4M8.4 1.2V8.5M4.4 4H8.4M4.4 4V8.5" stroke="#d0d0d0" stroke-width="0.55" fill="none"/><text x="29.5" y="5.8" font-size="5.2" fill="#a8a8a8" font-family="Liberation Sans,sans-serif">35</text><text x="70.0" y="5.8" font-size="5.2" fill="#a8a8a8" font-family="Liberation Sans,sans-serif">30</text><text x="110.5" y="5.8" font-size="5.2" fill="#a8a8a8" font-family="Liberation Sans,sans-serif">25</text><text x="151.0" y="5.8" font-size="5.2" fill="#a8a8a8" font-family="Liberation Sans,sans-serif">20</text><text x="191.5" y="5.8" font-size="5.2" fill="#a8a8a8" font-family="Liberation Sans,sans-serif">15</text><text x="232.0" y="5.8" font-size="5.2" fill="#a8a8a8" font-family="Liberation Sans,sans-serif">10</text><text x="272.5" y="5.8" font-size="5.2" fill="#a8a8a8" font-family="Liberation Sans,sans-serif">5</text><text x="313.0" y="5.8" font-size="5.2" fill="#a8a8a8" font-family="Liberation Sans,sans-serif">0</text><text x="353.5" y="5.8" font-size="5.2" fill="#a8a8a8" font-family="Liberation Sans,sans-serif">5</text><text x="394.0" y="5.8" font-size="5.2" fill="#a8a8a8" font-family="Liberation Sans,sans-serif">10</text><text x="434.5" y="5.8" font-size="5.2" fill="#a8a8a8" font-family="Liberation Sans,sans-serif">15</text><text x="475.0" y="5.8" font-size="5.2" fill="#a8a8a8" font-family="Liberation Sans,sans-serif">20</text><text x="515.5" y="5.8" font-size="5.2" fill="#a8a8a8" font-family="Liberation Sans,sans-serif">25</text><text transform="translate(5.6 62.1) rotate(-90)" font-size="5.2" fill="#a8a8a8" font-family="Liberation Sans,sans-serif">25</text><text transform="translate(5.6 99.0) rotate(-90)" font-size="5.2" fill="#a8a8a8" font-family="Liberation Sans,sans-serif">20</text><text transform="translate(5.6 135.9) rotate(-90)" font-size="5.2" fill="#a8a8a8" font-family="Liberation Sans,sans-serif">15</text><text transform="translate(5.6 172.8) rotate(-90)" font-size="5.2" fill="#a8a8a8" font-family="Liberation Sans,sans-serif">10</text><text transform="translate(5.6 209.7) rotate(-90)" font-size="5.2" fill="#a8a8a8" font-family="Liberation Sans,sans-serif">5</text><text transform="translate(5.6 246.6) rotate(-90)" font-size="5.2" fill="#a8a8a8" font-family="Liberation Sans,sans-serif">0</text><text transform="translate(5.6 283.5) rotate(-90)" font-size="5.2" fill="#a8a8a8" font-family="Liberation Sans,sans-serif">5</text><text transform="translate(5.6 320.4) rotate(-90)" font-size="5.2" fill="#a8a8a8" font-family="Liberation Sans,sans-serif">10</text><text transform="translate(5.6 357.3) rotate(-90)" font-size="5.2" fill="#a8a8a8" font-family="Liberation Sans,sans-serif">15</text><text transform="translate(5.6 394.2) rotate(-90)" font-size="5.2" fill="#a8a8a8" font-family="Liberation Sans,sans-serif">20</text><text transform="translate(5.6 431.1) rotate(-90)" font-size="5.2" fill="#a8a8a8" font-family="Liberation Sans,sans-serif">25</text></svg>
<div class="b" style="left:553.00px;top:102.70px;width:1.00px;height:474.00px;background:#f2f2f2;"></div>
<div class="b" style="left:1092.20px;top:102.70px;width:0.80px;height:474.00px;background:#f2f2f2;"></div>
<svg class="b" style="left:553px;top:102.7px" width="540" height="472.6" viewBox="0 0 540 472.6"><path d="M311.29999999999995 0V472.6M0 247.8H540" stroke="#0a5c0a" stroke-width="1" fill="none"/><path d="M175.9 98.6L254.0 119.5M446.7 98.6L368.6 119.5M172.7 106.3L251.2 126.4M449.9 106.3L371.4 126.4M169.7 114.0L248.5 133.4M452.9 114.0L374.1 133.4M166.7 121.8L245.9 140.4M455.9 121.8L376.7 140.4M164.0 129.6L243.4 147.4M458.6 129.6L379.2 147.4M161.3 137.4L240.7 154.4M461.3 137.4L381.9 154.4M158.6 145.3L238.1 161.4M464.0 145.3L384.5 161.4M155.9 153.1L235.5 168.4M466.7 153.1L387.1 168.4M153.1 161.0L232.9 175.4M469.5 161.0L389.7 175.4M150.3 168.8L230.2 182.4M472.3 168.8L392.4 182.4M147.7 176.7L227.4 189.3M474.9 176.7L395.2 189.3M145.3 184.6L224.7 196.3M477.3 184.6L397.9 196.3M143.0 192.6L222.1 203.3M479.6 192.6L400.5 203.3M140.8 200.6L219.9 210.5M481.8 200.6L402.7 210.5M138.7 208.6L218.0 217.7M483.9 208.6L404.6 217.7M136.8 216.7L216.3 225.0M485.8 216.7L406.3 225.0M134.8 224.8L214.7 232.3M487.8 224.8L407.9 232.3M133.0 232.9L213.2 239.6M489.6 232.9L409.4 239.6M131.4 241.0L211.8 246.9M491.2 241.0L410.8 246.9M130.0 249.2L210.4 254.3M492.6 249.2L412.2 254.3M128.9 257.4L209.2 261.6M493.7 257.4L413.4 261.6M127.8 265.7L208.1 269.0M494.8 265.7L414.5 269.0M126.9 273.9L207.1 276.4M495.7 273.9L415.5 276.4M125.9 282.2L206.3 283.9M496.7 282.2L416.3 283.9M125.1 290.4L205.7 291.3M497.5 290.4L416.9 291.3M125.3 312.0L205.9 306.4M497.3 312.0L416.7 306.4M127.2 325.2L207.0 313.9M495.4 325.2L415.6 313.9M130.2 338.1L208.7 321.3M492.4 338.1L413.9 321.3M134.2 350.8L210.9 328.5M488.4 350.8L411.7 328.5M139.2 363.1L213.7 335.6M483.4 363.1L408.9 335.6M145.2 375.0L217.0 342.4M477.4 375.0L405.6 342.4M152.1 386.4L220.8 349.0M470.5 386.4L401.8 349.0M159.9 397.2L225.2 355.2M462.7 397.2L397.4 355.2M168.5 407.4L229.9 361.1M454.1 407.4L392.7 361.1M177.8 416.9L235.0 366.7M444.8 416.9L387.6 366.7M187.8 425.7L240.6 371.9M434.8 425.7L382.0 371.9M198.4 433.7L246.5 376.6M424.2 433.7L376.1 376.6M209.5 441.0L252.8 380.9M413.1 441.0L369.8 380.9M221.2 447.5L259.4 384.6M401.4 447.5L363.2 384.6M233.2 453.1L266.3 387.8M389.4 453.1L356.3 387.8M245.7 457.9L273.4 390.4M376.9 457.9L349.2 390.4M258.4 461.9L280.8 392.3M364.2 461.9L341.8 392.3M271.3 464.9L288.3 393.5M351.3 464.9L334.3 393.5M284.5 467.1L295.8 394.2M338.1 467.1L326.8 394.2M297.7 468.5L303.4 394.6M324.9 468.5L319.2 394.6M311.0 468.9L311.0 394.7M235.3 34.6L267.4 101.1M387.3 34.6L355.2 101.1M201.1 57.3L260.7 105.3M421.5 57.3L361.9 105.3M283.8 27.1L283.8 100.9M291.8 27.1L291.8 100.9M300.0 27.1L300.0 100.9M307.8 27.1L307.8 100.9M315.6 27.1L315.6 100.9M323.6 27.1L323.6 100.9M331.6 27.1L331.6 100.9M339.4 27.1L339.4 100.9" stroke="#727272" stroke-width="0.7" fill="none"/><path d="M311.3 100.9 L277.0 100.9 L270.0 100.9 L269.5 101.0 L268.8 101.0 L268.0 101.1 L267.1 101.3 L266.2 101.5 L265.4 101.7 L264.7 102.0 L263.9 102.4 L263.2 102.8 L262.5 103.3 L261.8 103.8 L261.2 104.3 L260.6 104.9 L260.1 105.5 L259.7 106.1 L259.2 106.8 L258.8 107.6 L258.4 108.3 L258.0 109.1 L257.7 110.1 L257.3 111.0 L257.0 112.0 L256.8 112.7 L256.6 113.3 L256.5 113.6 L256.0 114.9 L255.3 116.3 L254.6 118.0 L253.9 119.8 L253.1 121.7 L252.3 123.7 L251.5 125.6 L250.7 127.5 L250.0 129.3 L249.3 131.0 L248.7 132.6 L248.2 134.2 L247.6 135.8 L247.0 137.4 L246.4 139.1 L245.7 140.9 L245.0 142.9 L244.3 145.0 L243.4 147.3 L242.4 149.9 L241.4 152.6 L240.3 155.6 L239.2 158.7 L238.0 161.8 L236.7 165.1 L235.5 168.4 L234.3 171.7 L233.1 174.9 L231.9 178.0 L230.7 181.0 L229.6 184.0 L228.4 187.0 L227.2 189.9 L226.0 192.9 L224.8 195.9 L223.6 199.0 L222.5 202.1 L221.4 205.4 L220.4 208.8 L219.4 212.4 L218.4 216.1 L217.5 220.0 L216.5 224.0 L215.6 228.1 L214.8 232.1 L213.9 236.1 L213.1 240.0 L212.4 243.7 L211.7 247.3 L211.0 250.7 L210.4 254.1 L209.9 257.4 L209.3 260.6 L208.8 263.7 L208.4 266.7 L208.0 269.7 L207.6 272.5 L207.2 275.3 L206.9 277.9 L206.6 280.4 L206.4 282.8 L206.1 285.1 L206.0 287.2 L205.8 289.3 L205.7 291.3 L205.6 293.2 L205.5 295.1 L205.5 297.0 L205.5 298.8 L205.5 300.6 L205.6 302.2 L205.6 303.8 L205.8 305.3 L205.9 306.8 L206.1 308.2 L206.2 309.6 L206.5 311.1 L206.7 312.6 L207.0 314.1 L207.3 315.7 L207.6 317.2 L208.0 318.8 L208.4 320.4 L208.8 322.0 L209.3 323.6 L209.8 325.2 L210.3 326.8 L210.8 328.3 L211.4 329.9 L212.0 331.5 L212.6 333.0 L213.3 334.6 L214.0 336.2 L214.7 337.7 L215.4 339.3 L216.2 340.8 L217.0 342.3 L217.8 343.8 L218.6 345.3 L219.5 346.8 L220.3 348.2 L221.2 349.6 L222.2 351.0 L223.1 352.4 L224.1 353.8 L225.1 355.1 L226.1 356.5 L227.2 357.8 L228.2 359.1 L229.3 360.4 L230.3 361.6 L231.4 362.9 L232.5 364.1 L233.7 365.3 L234.8 366.5 L236.0 367.7 L237.2 368.9 L238.4 370.0 L239.6 371.1 L240.9 372.2 L242.1 373.3 L243.4 374.3 L244.8 375.3 L246.1 376.3 L247.5 377.3 L248.8 378.3 L250.2 379.2 L251.6 380.1 L253.0 381.0 L254.4 381.8 L255.8 382.7 L257.3 383.5 L258.8 384.3 L260.2 385.0 L261.7 385.7 L263.2 386.4 L264.7 387.1 L266.1 387.7 L267.6 388.3 L269.1 388.9 L270.5 389.4 L272.0 389.9 L273.4 390.4 L274.9 390.8 L276.3 391.2 L277.8 391.6 L279.3 392.0 L280.7 392.3 L282.2 392.6 L283.7 392.9 L285.2 393.1 L286.7 393.3 L288.1 393.5 L289.6 393.7 L291.1 393.8 L292.6 394.0 L294.1 394.1 L295.6 394.2 L297.0 394.3 L298.4 394.4 L299.8 394.5 L301.2 394.5 L302.6 394.6 L304.0 394.6 L305.4 394.7 L306.8 394.7 L308.2 394.7 L309.6 394.7 L311.0 394.7 L313.0 394.7 L314.4 394.7 L315.8 394.7 L317.2 394.7 L318.6 394.6 L320.0 394.6 L321.4 394.5 L322.8 394.5 L324.2 394.4 L325.6 394.3 L327.0 394.2 L328.5 394.1 L330.0 394.0 L331.5 393.8 L333.0 393.7 L334.5 393.5 L335.9 393.3 L337.4 393.1 L338.9 392.9 L340.4 392.6 L341.9 392.3 L343.3 392.0 L344.8 391.6 L346.3 391.2 L347.7 390.8 L349.2 390.4 L350.6 389.9 L352.1 389.4 L353.5 388.9 L355.0 388.3 L356.5 387.7 L357.9 387.1 L359.4 386.4 L360.9 385.7 L362.4 385.0 L363.8 384.3 L365.3 383.5 L366.8 382.7 L368.2 381.8 L369.6 381.0 L371.0 380.1 L372.4 379.2 L373.8 378.3 L375.1 377.3 L376.5 376.3 L377.8 375.3 L379.2 374.3 L380.5 373.3 L381.7 372.2 L383.0 371.1 L384.2 370.0 L385.4 368.9 L386.6 367.7 L387.8 366.5 L388.9 365.3 L390.1 364.1 L391.2 362.9 L392.3 361.6 L393.3 360.4 L394.4 359.1 L395.4 357.8 L396.5 356.5 L397.5 355.1 L398.5 353.8 L399.5 352.4 L400.4 351.0 L401.4 349.6 L402.3 348.2 L403.1 346.8 L404.0 345.3 L404.8 343.8 L405.6 342.3 L406.4 340.8 L407.2 339.3 L407.9 337.7 L408.6 336.2 L409.3 334.6 L410.0 333.0 L410.6 331.5 L411.2 329.9 L411.8 328.3 L412.3 326.8 L412.8 325.2 L413.3 323.6 L413.8 322.0 L414.2 320.4 L414.6 318.8 L415.0 317.2 L415.3 315.7 L415.6 314.1 L415.9 312.6 L416.1 311.1 L416.4 309.6 L416.5 308.2 L416.7 306.8 L416.8 305.3 L417.0 303.8 L417.0 302.2 L417.1 300.6 L417.1 298.8 L417.1 297.0 L417.1 295.1 L417.0 293.2 L416.9 291.3 L416.8 289.3 L416.6 287.2 L416.5 285.1 L416.2 282.8 L416.0 280.4 L415.7 277.9 L415.4 275.3 L415.0 272.5 L414.6 269.7 L414.2 266.7 L413.8 263.7 L413.3 260.6 L412.7 257.4 L412.2 254.1 L411.6 250.7 L410.9 247.3 L410.2 243.7 L409.5 240.0 L408.7 236.1 L407.8 232.1 L407.0 228.1 L406.1 224.0 L405.1 220.0 L404.2 216.1 L403.2 212.4 L402.2 208.8 L401.2 205.4 L400.1 202.1 L399.0 199.0 L397.8 195.9 L396.6 192.9 L395.4 189.9 L394.2 187.0 L393.0 184.0 L391.9 181.0 L390.7 178.0 L389.5 174.9 L388.3 171.7 L387.1 168.4 L385.9 165.1 L384.6 161.8 L383.4 158.7 L382.3 155.6 L381.2 152.6 L380.2 149.9 L379.2 147.3 L378.3 145.0 L377.6 142.9 L376.9 140.9 L376.2 139.1 L375.6 137.4 L375.0 135.8 L374.4 134.2 L373.9 132.6 L373.3 131.0 L372.6 129.3 L371.9 127.5 L371.1 125.6 L370.3 123.7 L369.5 121.7 L368.7 119.8 L368.0 118.0 L367.3 116.3 L366.6 114.9 L366.1 113.6 L366.0 113.3 L365.8 112.7 L365.6 112.0 L365.3 111.0 L364.9 110.1 L364.6 109.1 L364.2 108.3 L363.8 107.6 L363.4 106.8 L362.9 106.1 L362.5 105.5 L362.0 104.9 L361.4 104.3 L360.8 103.8 L360.1 103.3 L359.4 102.8 L358.7 102.4 L357.9 102.0 L357.2 101.7 L356.4 101.5 L355.5 101.3 L354.6 101.1 L353.8 101.0 L353.1 101.0 L352.6 100.9 L345.6 100.9 L311.3 100.9Z" stroke="#a016a0" stroke-width="1.1" fill="none"/><path d="M275.5 27.1 L235.3 34.6 L201.1 57.3 L179.0 90.9M347.1 27.1 L387.3 34.6 L421.5 57.3 L443.6 90.9" stroke="#13808e" stroke-width="1.1" fill="none"/><path d="M279.0 27.1H347.1" stroke="#7a7a18" stroke-width="1.1" fill="none"/><path d="M179.0 90.9 L178.3 92.5 L177.5 94.6 L176.5 97.1 L175.3 99.8 L174.1 102.8 L172.9 105.9 L171.6 109.1 L170.3 112.3 L169.1 115.4 L168.0 118.3 L167.0 121.1 L165.9 124.0 L164.9 126.8 L163.9 129.7 L162.9 132.6 L161.9 135.5 L160.9 138.4 L159.9 141.4 L158.9 144.3 L157.9 147.3 L156.9 150.3 L155.8 153.3 L154.7 156.4 L153.6 159.5 L152.5 162.5 L151.4 165.6 L150.3 168.7 L149.3 171.8 L148.3 174.9 L147.3 178.0 L146.4 181.1 L145.4 184.1 L144.5 187.1 L143.7 190.1 L142.8 193.2 L142.0 196.2 L141.2 199.3 L140.3 202.4 L139.5 205.6 L138.7 208.8 L137.9 212.1 L137.1 215.5 L136.2 218.9 L135.4 222.3 L134.6 225.8 L133.8 229.3 L133.1 232.8 L132.3 236.3 L131.6 239.8 L131.0 243.3M443.6 90.9 L444.3 92.5 L445.1 94.6 L446.1 97.1 L447.3 99.8 L448.5 102.8 L449.7 105.9 L451.0 109.1 L452.3 112.3 L453.5 115.4 L454.6 118.3 L455.6 121.1 L456.7 124.0 L457.7 126.8 L458.7 129.7 L459.7 132.6 L460.7 135.5 L461.7 138.4 L462.7 141.4 L463.7 144.3 L464.7 147.3 L465.7 150.3 L466.8 153.3 L467.9 156.4 L469.0 159.5 L470.1 162.5 L471.2 165.6 L472.3 168.7 L473.3 171.8 L474.3 174.9 L475.3 178.0 L476.2 181.1 L477.2 184.1 L478.1 187.1 L478.9 190.1 L479.8 193.2 L480.6 196.2 L481.4 199.3 L482.3 202.4 L483.1 205.6 L483.9 208.8 L484.7 212.1 L485.5 215.5 L486.4 218.9 L487.2 222.3 L488.0 225.8 L488.8 229.3 L489.5 232.8 L490.3 236.3 L491.0 239.8 L491.6 243.3" stroke="#8c8a14" stroke-width="1.1" fill="none"/><path d="M131.0 243.3 L130.4 246.8 L129.8 250.4 L129.3 254.1 L128.8 257.8 L128.3 261.5 L127.9 265.0 L127.5 268.5 L127.1 271.9 L126.7 275.0 L126.4 277.9 L126.1 280.6 L125.8 283.1 L125.6 285.4 L125.4 287.6 L125.2 289.7 L125.0 291.7 L124.9 293.6 L124.8 295.3 L124.7 297.0 L124.6 298.7 L124.6 300.2 L124.5 301.6 L124.5 302.8 L124.6 303.9 L124.6 304.9 L124.7 305.9 L124.8 307.0 L124.9 308.0 L125.0 309.2 L125.1 310.4 L125.3 311.8 L125.4 313.2 L125.6 314.7 L125.8 316.2 L126.0 317.7 L126.2 319.3 L126.4 320.9 L126.7 322.4 L127.0 323.9 L127.2 325.4 L127.5 326.9 L127.8 328.4 L128.1 329.9 L128.5 331.4 L128.8 332.9 L129.2 334.4 L129.6 335.8 L129.9 337.3 L130.3 338.8 L130.8 340.2 L131.2 341.7 L131.6 343.1 L132.1 344.6 L132.6 346.1 L133.0 347.5 L133.5 348.9 L134.0 350.4 L134.6 351.8 L135.1 353.3 L135.7 354.7 L136.2 356.1 L136.8 357.5 L137.4 358.9 L138.0 360.3 L138.6 361.7 L139.2 363.1 L139.9 364.5 L140.5 365.9 L141.2 367.3 L141.9 368.7 L142.6 370.0 L143.3 371.4 L144.0 372.8 L144.7 374.1 L145.5 375.5 L146.2 376.8 L147.0 378.1 L147.8 379.5 L148.6 380.8 L149.4 382.1 L150.2 383.4 L151.1 384.7 L151.9 386.0 L152.8 387.3 L153.6 388.6 L154.5 389.8 L155.4 391.1 L156.3 392.4 L157.2 393.6 L158.1 394.9 L159.1 396.1 L160.0 397.3 L161.0 398.6 L162.0 399.8 L163.0 401.0 L164.0 402.2 L165.0 403.4 L166.0 404.6 L167.0 405.7 L168.1 406.9 L169.1 408.0 L170.2 409.2 L171.2 410.3 L172.3 411.5 L173.4 412.6 L174.5 413.7 L175.6 414.8 L176.8 415.9 L177.9 417.0 L179.1 418.1 L180.2 419.1 L181.4 420.2 L182.6 421.2 L183.7 422.3 L184.9 423.3 L186.1 424.3 L187.4 425.3 L188.6 426.3 L189.8 427.3 L191.1 428.3 L192.3 429.3 L193.6 430.2 L194.8 431.2 L196.1 432.1 L197.4 433.0 L198.7 433.9 L200.0 434.9 L201.3 435.7 L202.6 436.6 L204.0 437.5 L205.3 438.4 L206.7 439.2 L208.0 440.1 L209.4 440.9 L210.7 441.7 L212.1 442.5 L213.5 443.3 L214.9 444.1 L216.3 444.9 L217.7 445.6 L219.1 446.4 L220.5 447.1 L222.0 447.9 L223.4 448.6 L224.8 449.3 L226.3 450.0 L227.7 450.7 L229.2 451.3 L230.7 452.0 L232.1 452.6 L233.6 453.3 L235.1 453.9 L236.6 454.5 L238.1 455.1 L239.6 455.7 L241.1 456.3 L242.6 456.8 L244.1 457.4 L245.7 457.9 L247.2 458.4 L248.7 458.9 L250.2 459.4 L251.8 459.9 L253.3 460.4 L254.9 460.9 L256.4 461.3 L258.0 461.8 L259.6 462.2 L261.1 462.6 L262.7 463.0 L264.3 463.4 L265.9 463.7 L267.4 464.1 L269.0 464.5 L270.6 464.8 L272.2 465.1 L273.8 465.4 L275.4 465.7 L277.0 466.0 L278.6 466.3 L280.2 466.5 L281.8 466.8 L283.4 467.0 L285.0 467.2 L286.6 467.4 L288.3 467.6 L289.9 467.8 L291.5 467.9 L293.1 468.1 L294.7 468.2 L296.4 468.4 L298.0 468.5 L299.6 468.6 L301.2 468.7 L302.8 468.7 L304.4 468.8 L306.1 468.8 L307.7 468.9 L309.3 468.9 L311.0 468.9 L313.3 468.9 L314.9 468.9 L316.5 468.8 L318.2 468.8 L319.8 468.7 L321.4 468.7 L323.0 468.6 L324.6 468.5 L326.2 468.4 L327.9 468.2 L329.5 468.1 L331.1 467.9 L332.7 467.8 L334.3 467.6 L336.0 467.4 L337.6 467.2 L339.2 467.0 L340.8 466.8 L342.4 466.5 L344.0 466.3 L345.6 466.0 L347.2 465.7 L348.8 465.4 L350.4 465.1 L352.0 464.8 L353.6 464.5 L355.2 464.1 L356.7 463.7 L358.3 463.4 L359.9 463.0 L361.5 462.6 L363.0 462.2 L364.6 461.8 L366.2 461.3 L367.7 460.9 L369.3 460.4 L370.8 459.9 L372.4 459.4 L373.9 458.9 L375.4 458.4 L376.9 457.9 L378.5 457.4 L380.0 456.8 L381.5 456.3 L383.0 455.7 L384.5 455.1 L386.0 454.5 L387.5 453.9 L389.0 453.3 L390.5 452.6 L391.9 452.0 L393.4 451.3 L394.9 450.7 L396.3 450.0 L397.8 449.3 L399.2 448.6 L400.6 447.9 L402.1 447.1 L403.5 446.4 L404.9 445.6 L406.3 444.9 L407.7 444.1 L409.1 443.3 L410.5 442.5 L411.9 441.7 L413.2 440.9 L414.6 440.1 L415.9 439.2 L417.3 438.4 L418.6 437.5 L420.0 436.6 L421.3 435.7 L422.6 434.9 L423.9 433.9 L425.2 433.0 L426.5 432.1 L427.8 431.2 L429.0 430.2 L430.3 429.3 L431.5 428.3 L432.8 427.3 L434.0 426.3 L435.2 425.3 L436.5 424.3 L437.7 423.3 L438.9 422.3 L440.0 421.2 L441.2 420.2 L442.4 419.1 L443.5 418.1 L444.7 417.0 L445.8 415.9 L447.0 414.8 L448.1 413.7 L449.2 412.6 L450.3 411.5 L451.4 410.3 L452.4 409.2 L453.5 408.0 L454.5 406.9 L455.6 405.7 L456.6 404.6 L457.6 403.4 L458.6 402.2 L459.6 401.0 L460.6 399.8 L461.6 398.6 L462.6 397.3 L463.5 396.1 L464.5 394.9 L465.4 393.6 L466.3 392.4 L467.2 391.1 L468.1 389.8 L469.0 388.6 L469.8 387.3 L470.7 386.0 L471.5 384.7 L472.4 383.4 L473.2 382.1 L474.0 380.8 L474.8 379.5 L475.6 378.1 L476.4 376.8 L477.1 375.5 L477.9 374.1 L478.6 372.8 L479.3 371.4 L480.0 370.0 L480.7 368.7 L481.4 367.3 L482.1 365.9 L482.7 364.5 L483.4 363.1 L484.0 361.7 L484.6 360.3 L485.2 358.9 L485.8 357.5 L486.4 356.1 L486.9 354.7 L487.5 353.3 L488.0 351.8 L488.6 350.4 L489.1 348.9 L489.6 347.5 L490.0 346.1 L490.5 344.6 L491.0 343.1 L491.4 341.7 L491.8 340.2 L492.3 338.8 L492.7 337.3 L493.0 335.8 L493.4 334.4 L493.8 332.9 L494.1 331.4 L494.5 329.9 L494.8 328.4 L495.1 326.9 L495.4 325.4 L495.6 323.9 L495.9 322.4 L496.2 320.9 L496.4 319.3 L496.6 317.7 L496.8 316.2 L497.0 314.7 L497.2 313.2 L497.3 311.8 L497.5 310.4 L497.6 309.2 L497.7 308.0 L497.8 307.0 L497.9 305.9 L498.0 304.9 L498.0 303.9 L498.1 302.8 L498.1 301.6 L498.0 300.2 L498.0 298.7 L497.9 297.0 L497.8 295.3 L497.7 293.6 L497.6 291.7 L497.4 289.7 L497.2 287.6 L497.0 285.4 L496.8 283.1 L496.5 280.6 L496.2 277.9 L495.9 275.0 L495.5 271.9 L495.1 268.5 L494.7 265.0 L494.3 261.5 L493.8 257.8 L493.3 254.1 L492.8 250.4 L492.2 246.8 L491.6 243.3" stroke="#13808e" stroke-width="1.1" fill="none"/><path d="M124.5 298.7H205.8M498.1 298.7H416.8" stroke="#8c4a12" stroke-width="1.05" fill="none"/><path d="M275.5 27.1L276.2 100.9M279.0 27.1L277.6 100.9M179.0 90.9L256.9 112.6M182.0 87.1L257.5 111.5M346.2 27.1L345.4 100.9M344.6 27.1L344.4 100.9M441.2 86.9L365.1 112.6" stroke="#b8601c" stroke-width="0.95" fill="none"/><circle cx="275.5" cy="27.1" r="2" fill="#28e028"/><circle cx="279.0" cy="27.1" r="2" fill="#28e028"/><circle cx="346.0" cy="27.1" r="2" fill="#28e028"/><circle cx="179.0" cy="90.9" r="2" fill="#28e028"/><circle cx="441.2" cy="86.9" r="2" fill="#28e028"/><circle cx="124.5" cy="298.7" r="2" fill="#28e028"/><circle cx="497.4" cy="298.7" r="2" fill="#28e028"/></svg>
<div class="t" style="left:569.40px;top:127.50px;font-size:11.5px;line-height:14px;color:#2fe02f;transform:scaleX(1.080);transform-origin:left center;">Operation:</div>
<div class="t" style="left:569.40px;top:141.50px;font-size:11.5px;line-height:14px;color:#2fe02f;transform:scaleX(1.097);transform-origin:left center;">Normal adjustment:   Left click</div>
<div class="t" style="left:569.40px;top:155.50px;font-size:11.5px;line-height:14px;color:#2fe02f;transform:scaleX(1.095);transform-origin:left center;">Normal reset:    Ctrl + Left click</div>
<div class="t" style="left:569.40px;top:169.50px;font-size:11.5px;line-height:14px;color:#2fe02f;transform:scaleX(1.109);transform-origin:left center;">Add node:    Shift + Left click</div>
<div class="t" style="left:569.40px;top:183.50px;font-size:11.5px;line-height:14px;color:#2fe02f;transform:scaleX(1.105);transform-origin:left center;">Remove node:    Shift + Right click</div>
<div class="t" style="left:569.40px;top:197.50px;font-size:11.5px;line-height:14px;color:#2fe02f;transform:scaleX(1.100);transform-origin:left center;">Separate and merge: Right click</div>
<div class="b" style="left:553.00px;top:576.20px;width:540.00px;height:12.00px;background:#e9e9e9;border-top:1px solid #fafafa;border-radius:0 0 2px 2px;"></div>
<div class="t" style="left:914.00px;top:578.70px;font-size:8px;line-height:10px;color:#111;transform:scaleX(0.980);transform-origin:left center;">Pos: X:4.657 Y:2.805</div>
<div class="t" style="left:1003.30px;top:579.30px;font-size:8px;line-height:10px;color:#111;transform:scaleX(0.964);transform-origin:left center;">e Tu</div>
<div class="b" style="left:1020.00px;top:577.20px;width:21.00px;height:10.40px;background:#fff;border:1px solid #9a9a9a;"></div>
<div class="t" style="left:1022.00px;top:579.20px;font-size:7px;line-height:9px;color:#222;">10</div>
<div class="t" style="left:1041.60px;top:579.30px;font-size:8px;line-height:10px;color:#111;transform:scaleX(0.901);transform-origin:left center;">View:</div>
<div class="b" style="left:1059.70px;top:576.80px;width:32.00px;height:11.00px;background:#fff;border:1px solid #8a8a8a;"></div>
<div class="t" style="left:1061.20px;top:578.60px;font-size:7px;line-height:9px;color:#444;transform:scaleX(0.894);transform-origin:left center;">500%</div>
<div class="b" style="left:1081.50px;top:577.80px;width:9.20px;height:9.00px;background:#f4f4f4;border-left:1px solid #ccc;"></div>
<svg class="b" style="left:1083.80px;top:581.50px" width="4.6" height="2.6"><path d="M0 0L4.6 0L2.3 2.6Z" fill="#111"/></svg>
<div class="b" style="left:1093.60px;top:95.90px;width:15.00px;height:13.30px;background:#cdcdcd;"></div>
<svg class="b" style="left:1094.00px;top:98.40px;overflow:visible" width="15" height="10" viewBox="0 0 15 10" fill="none" stroke-linecap="round" stroke-linejoin="round"><path d="M0.6 5L5.6 9.4L14.4 0.6" stroke="#555" stroke-width="1"/></svg>
<div class="b" style="left:1093.60px;top:110.80px;width:15.00px;height:13.00px;background:#d2d2d2;"></div>
<svg class="b" style="left:1095.40px;top:113.40px;overflow:visible" width="10" height="9" viewBox="0 0 10 9" fill="none" stroke-linecap="round" stroke-linejoin="round"><path d="M0.5 0.5L9.5 8.5M9.5 0.5L0.5 8.5" stroke="#444" stroke-width="1"/></svg>
<div class="b" style="left:1093.60px;top:127.30px;width:13.60px;height:12.60px;background:#1ee61e;"></div>
<div class="b" style="left:1093.60px;top:142.70px;width:13.60px;height:12.60px;background:#f40cf0;"></div>
<div class="b" style="left:1093.60px;top:158.00px;width:13.60px;height:12.60px;background:#f4f010;"></div>
<div class="b" style="left:1093.60px;top:173.30px;width:13.60px;height:12.60px;background:#2a5ee6;"></div>
<div class="b" style="left:1093.60px;top:188.60px;width:13.60px;height:12.60px;background:#f08cb8;"></div>
<div class="b" style="left:1093.60px;top:203.90px;width:13.60px;height:12.60px;background:#10e0e8;"></div>
<div class="b" style="left:1093.60px;top:219.20px;width:13.60px;height:12.60px;background:#e8780c;"></div>
</div></div>
</body></html>
